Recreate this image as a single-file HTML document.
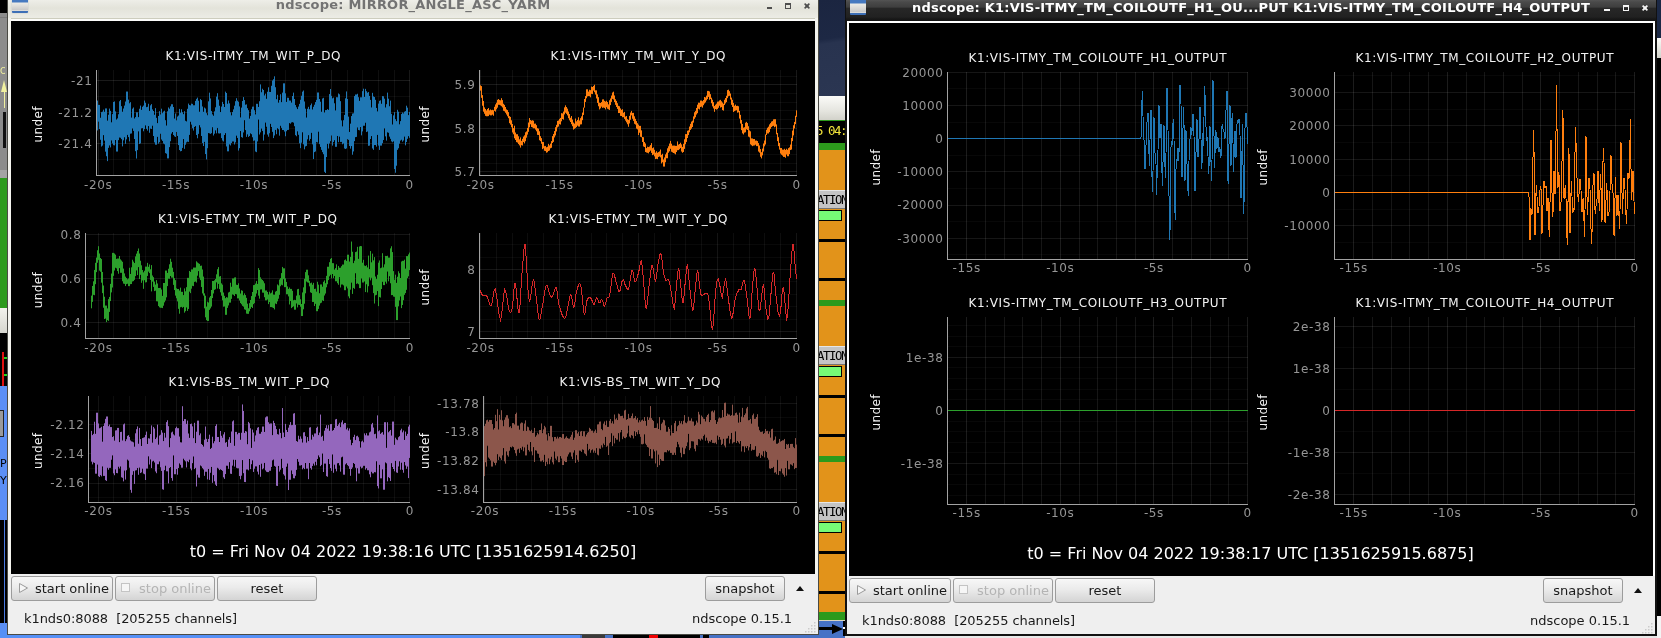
<!DOCTYPE html>
<html><head><meta charset="utf-8"><title>ndscope</title>
<style>
html,body{margin:0;padding:0;background:#000;}
body{width:1661px;height:638px;overflow:hidden;position:relative;font-family:"DejaVu Sans","Liberation Sans",sans-serif;font-size:13px;color:#1a1a1a;}
.a{position:absolute;}
.btn{position:absolute;box-sizing:border-box;border:1px solid #9c9c9c;border-radius:3px;background:linear-gradient(#f7f7f7,#ebebeb 45%,#d4d4d4);height:25px;line-height:24px;text-align:center;font-size:13px;color:#1a1a1a;white-space:nowrap;}
.btn.dis{color:#b4b4b4;}
.st{position:absolute;font-size:13px;color:#1a1a1a;white-space:nowrap;line-height:16px;}
</style></head><body>
<div id="root" style="position:absolute;left:0;top:0;width:1661px;height:638px;overflow:hidden;will-change:transform;background:#000">

<!-- ===== desktop behind the windows ===== -->
<!-- left strip -->
<div class="a" style="left:0;top:0;width:8px;height:13px;background:#000"></div>
<div class="a" style="left:0;top:13px;width:8px;height:165px;background:#8c8c8c"></div>
<div class="a" style="left:0;top:17px;width:8px;height:1px;background:#7a7a7a"></div>
<div class="a" style="left:0;top:66px;width:5px;height:10px;color:#f0f0a0;font-size:9px;line-height:10px;overflow:hidden">OL</div>
<div class="a" style="left:1px;top:80px;width:0;height:0;border-left:3px solid transparent;border-right:3px solid transparent;border-bottom:12px solid #f0f0a0"></div>
<div class="a" style="left:4px;top:90px;width:1px;height:18px;background:#f0f0a0"></div>
<div class="a" style="left:3px;top:112px;width:3px;height:36px;background:#111"></div>
<div class="a" style="left:0;top:170px;width:8px;height:8px;background:#a4a4a4"></div>
<div class="a" style="left:0;top:178px;width:8px;height:130px;background:#2c9a1c"></div>
<div class="a" style="left:0;top:308px;width:8px;height:25px;background:linear-gradient(#f2f2ec,#d6d6ce)"></div>
<div class="a" style="left:0;top:333px;width:8px;height:53px;background:#000"></div>
<div class="a" style="left:2px;top:352px;width:2px;height:34px;background:#e01010"></div>
<div class="a" style="left:4px;top:357px;width:3px;height:2px;background:#20d020"></div>
<div class="a" style="left:4px;top:374px;width:3px;height:2px;background:#20d020"></div>
<div class="a" style="left:0;top:386px;width:8px;height:134px;background:#5b8ff5"></div>
<div class="a" style="left:0;top:410px;width:4px;height:27px;background:#9a9a9a;border-right:1px solid #222;border-top:1px solid #222;border-bottom:1px solid #222;box-sizing:border-box"></div>
<div class="a" style="left:0;top:455px;width:7px;font-size:11px;line-height:17px;color:#000;overflow:hidden">P<br>Y</div>
<div class="a" style="left:0;top:520px;width:8px;height:103px;background:#000"></div>
<div class="a" style="left:4px;top:520px;width:1px;height:103px;background:#4a7ae0"></div>
<div class="a" style="left:0;top:623px;width:8px;height:15px;background:#5b8ff5"></div>
<!-- bottom strip -->
<div class="a" style="left:0;top:630px;width:580px;height:8px;background:#5590f6"></div>
<div class="a" style="left:580px;top:630px;width:270px;height:8px;background:#4672c6"></div>
<div class="a" style="left:582px;top:634px;width:23px;height:4px;background:#3a3a3a"></div>
<div class="a" style="left:613px;top:634px;width:36px;height:4px;background:#000"></div>
<div class="a" style="left:649px;top:634px;width:9px;height:4px;background:#f00000"></div>
<div class="a" style="left:658px;top:634px;width:42px;height:4px;background:#000"></div>
<div class="a" style="left:703px;top:634px;width:6px;height:4px;background:#000"></div>
<!-- middle strip -->
<div class="a" style="left:818px;top:0;width:28px;height:96px;background:linear-gradient(172deg,#1b2540 0%,#1d2844 40%,#28334f 45%,#2b3652 100%)"></div>
<div class="a" style="left:818px;top:96px;width:28px;height:24px;background:linear-gradient(#fbfbf8,#e6e6e0 60%,#d2d2ca)"></div>
<div class="a" style="left:818px;top:120px;width:28px;height:23px;background:#000;border-top:1px solid #2c9a1c;box-sizing:border-box;color:#f2e43a;font-family:'DejaVu Sans Mono','Liberation Mono',monospace;font-size:12.5px;letter-spacing:-1.5px;line-height:20px;overflow:hidden;white-space:nowrap"><span style="margin-left:-2px">5 04:</span></div>
<div class="a" style="left:818px;top:143px;width:28px;height:7px;background:#2c9a1c"></div>
<div class="a" style="left:818px;top:150px;width:28px;height:472px;background:#e2931a"></div>
<!-- repeated widgets -->
<div class="a" style="left:818px;top:190px;width:28px;height:19px;background:#c4c4c4;border-top:1px solid #e6e6e6;border-bottom:1px solid #747474;box-sizing:border-box;font-family:'DejaVu Sans Mono','Liberation Mono',monospace;font-size:12.3px;letter-spacing:-1.4px;line-height:19px;color:#000;overflow:hidden;white-space:nowrap"><span style="margin-left:-1px">ATION</span></div>
<div class="a" style="left:818px;top:210px;width:24px;height:11px;background:#76fb76;border:1px solid #000;border-left:0;box-sizing:border-box"></div>
<div class="a" style="left:818px;top:239px;width:28px;height:3px;background:#000"></div>
<div class="a" style="left:818px;top:278px;width:28px;height:3px;background:#000"></div>
<div class="a" style="left:818px;top:300px;width:28px;height:6px;background:#2c9a1c"></div>
<div class="a" style="left:818px;top:346px;width:28px;height:19px;background:#c4c4c4;border-top:1px solid #e6e6e6;border-bottom:1px solid #747474;box-sizing:border-box;font-family:'DejaVu Sans Mono','Liberation Mono',monospace;font-size:12.3px;letter-spacing:-1.4px;line-height:19px;color:#000;overflow:hidden;white-space:nowrap"><span style="margin-left:-1px">ATION</span></div>
<div class="a" style="left:818px;top:366px;width:24px;height:11px;background:#76fb76;border:1px solid #000;border-left:0;box-sizing:border-box"></div>
<div class="a" style="left:818px;top:395px;width:28px;height:3px;background:#000"></div>
<div class="a" style="left:818px;top:434px;width:28px;height:3px;background:#000"></div>
<div class="a" style="left:818px;top:456px;width:28px;height:6px;background:#2c9a1c"></div>
<div class="a" style="left:818px;top:502px;width:28px;height:19px;background:#c4c4c4;border-top:1px solid #e6e6e6;border-bottom:1px solid #747474;box-sizing:border-box;font-family:'DejaVu Sans Mono','Liberation Mono',monospace;font-size:12.3px;letter-spacing:-1.4px;line-height:19px;color:#000;overflow:hidden;white-space:nowrap"><span style="margin-left:-1px">ATION</span></div>
<div class="a" style="left:818px;top:522px;width:24px;height:11px;background:#76fb76;border:1px solid #000;border-left:0;box-sizing:border-box"></div>
<div class="a" style="left:818px;top:551px;width:28px;height:3px;background:#000"></div>
<div class="a" style="left:818px;top:591px;width:28px;height:3px;background:#000"></div>
<div class="a" style="left:818px;top:612px;width:28px;height:8px;background:#2c9a1c;border-bottom:1.5px solid #d8d4c0"></div>
<div class="a" style="left:818px;top:621px;width:28px;height:17px;background:#4672c6"></div>
<div class="a" style="left:818px;top:627px;width:16px;height:2.5px;background:#000"></div>
<div class="a" style="left:832px;top:623.5px;width:0;height:0;border-top:5px solid transparent;border-bottom:5px solid transparent;border-left:11px solid #000"></div>
<!-- right strip -->
<div class="a" style="left:1656px;top:0;width:5px;height:38px;background:#1b2845"></div>
<div class="a" style="left:1657px;top:38px;width:4px;height:20px;background:linear-gradient(#fbfbf8,#d2d2ca)"></div>
<div class="a" style="left:1657px;top:616px;width:4px;height:22px;background:#f4f4f4"></div>

<!-- ===== WINDOW 1 (inactive) ===== -->
<div class="a" style="left:7px;top:0;width:812px;height:635px;background:#4a4a44"></div>
<div class="a" style="left:8px;top:0;width:810px;height:634px;background:#efefef"></div>
<div class="a" style="left:8px;top:0;width:810px;height:19px;background:linear-gradient(#eeeee8 0%,#e3e3da 45%,#ecece5 100%);border-bottom:1px solid #cdcdbe;box-sizing:border-box"></div>
<div class="a" style="left:8px;top:19px;width:810px;height:2px;background:#fcfcfa"></div>
<div class="a" style="left:8px;top:18px;width:3px;height:556px;background:#f4f4ee"></div>
<div class="a" style="left:815px;top:18px;width:3px;height:556px;background:#f4f4ee"></div>
<!-- icon -->
<div class="a" style="left:12px;top:-2px;width:16px;height:15px;border-radius:1px;background:linear-gradient(#4679c0 0,#4679c0 4px,#ecebe6 5px,#c9c9c9 12px,#eeeeea 13px,#3d6fb6 13.5px,#3d6fb6 15px);box-shadow:0 0 1px #7a8aa0"></div>
<div class="a" style="left:8px;top:-4px;width:810px;height:18px;line-height:18px;text-align:center;font-weight:bold;font-size:13px;color:#737373;white-space:nowrap;letter-spacing:0.22px">ndscope: MIRROR_ANGLE_ASC_YARM</div>
<!-- titlebar buttons -->
<div class="a" style="left:767px;top:7px;width:5px;height:2px;background:#4e4e4e"></div>
<div class="a" style="left:785px;top:3px;width:6px;height:6px;border:1px solid #4e4e4e;border-top:2px solid #4e4e4e;box-sizing:border-box"></div>
<svg class="a" style="left:803px;top:2px" width="8" height="8" viewBox="0 0 8 8"><path d="M1.6 1.6L6.4 6.4M6.4 1.6L1.6 6.4" stroke="#4e4e4e" stroke-width="1.5"/><rect x="2.6" y="2.6" width="2.8" height="2.8" fill="#4e4e4e"/></svg>
<!-- plot area -->
<div class="a" style="left:11px;top:21px;width:804px;height:553px;background:#000"></div>
<!-- buttons -->
<div class="btn" style="left:11px;top:576px;width:102px;text-indent:20px">start online</div>
<svg class="a" style="left:18px;top:581px" width="12" height="14" viewBox="0 0 12 14"><path d="M1.5 2.5L9.5 7L1.5 11.5Z" fill="#f6f6f6" stroke="#9a9a9a" stroke-width="1"/></svg>
<div class="btn dis" style="left:115px;top:576px;width:100px;text-indent:20px">stop online</div>
<div class="a" style="left:121px;top:583px;width:9px;height:9px;box-sizing:border-box;border:1px solid #c4c4c4;background:#f6f6f6"></div>
<div class="btn" style="left:217px;top:576px;width:100px">reset</div>
<div class="btn" style="left:705px;top:576px;width:80px">snapshot</div>
<div class="a" style="left:796px;top:586px;width:0;height:0;border-left:4px solid transparent;border-right:4px solid transparent;border-bottom:5px solid #111"></div>
<div class="st" style="left:24px;top:611px;letter-spacing:-0.07px">k1nds0:8088 &nbsp;[205255 channels]</div>
<div class="st" style="left:692px;top:611px;letter-spacing:0">ndscope 0.15.1</div>
<svg class="a" style="left:805px;top:621px" width="12" height="12" viewBox="0 0 12 12" fill="#cbcbcb"><rect x="9" y="1" width="1.5" height="1.5"/><rect x="6" y="4" width="1.5" height="1.5"/><rect x="9" y="4" width="1.5" height="1.5"/><rect x="3" y="7" width="1.5" height="1.5"/><rect x="6" y="7" width="1.5" height="1.5"/><rect x="9" y="7" width="1.5" height="1.5"/><rect x="0" y="10" width="1.5" height="1.5"/><rect x="3" y="10" width="1.5" height="1.5"/><rect x="6" y="10" width="1.5" height="1.5"/><rect x="9" y="10" width="1.5" height="1.5"/></svg>

<!-- ===== WINDOW 2 (active) ===== -->
<div class="a" style="left:843px;top:621px;width:4px;height:15px;background:#000"></div>
<div class="a" style="left:843px;top:626.5px;width:2px;height:2px;background:#fff"></div>
<div class="a" style="left:845px;top:0;width:812px;height:636px;background:#111"></div>
<div class="a" style="left:847px;top:0;width:808px;height:634px;background:#efefef"></div>
<div class="a" style="left:846px;top:0;width:810px;height:21px;background:linear-gradient(#545454 0,#4a4a4a 2px,#3e3e3e 7px,#272727 8.5px,#212121 17px,#171717 19px,#151515 21px)"></div>
<div class="a" style="left:847px;top:21px;width:808px;height:2px;background:#fff"></div>
<div class="a" style="left:847px;top:21px;width:2px;height:555px;background:#fff"></div>
<div class="a" style="left:1653px;top:21px;width:2px;height:555px;background:#fff"></div>
<div class="a" style="left:850px;top:-2px;width:16px;height:17px;border-radius:1px;background:linear-gradient(#4679c0 0,#4679c0 5px,#ecebe6 6px,#c9c9c9 14px,#eeeeea 15px,#3d6fb6 15.5px,#3d6fb6 17px)"></div>
<div class="a" style="left:912px;top:-1.5px;width:700px;height:18px;line-height:18px;font-weight:bold;font-size:13px;color:#fff;white-space:nowrap;letter-spacing:0.22px">ndscope: K1:VIS-ITMY_TM_COILOUTF_H1_OU...PUT K1:VIS-ITMY_TM_COILOUTF_H4_OUTPUT</div>
<div class="a" style="left:1604px;top:9px;width:6px;height:2px;background:#f4f4f4"></div>
<div class="a" style="left:1623px;top:5px;width:6px;height:6px;border:1px solid #f4f4f4;border-top:2px solid #f4f4f4;box-sizing:border-box"></div>
<svg class="a" style="left:1641px;top:4px" width="8" height="8" viewBox="0 0 8 8"><path d="M1.6 1.6L6.4 6.4M6.4 1.6L1.6 6.4" stroke="#f4f4f4" stroke-width="1.7"/><rect x="2.6" y="2.6" width="2.8" height="2.8" fill="#f4f4f4"/></svg>
<div class="a" style="left:849px;top:23px;width:804px;height:553px;background:#000"></div>
<div class="btn" style="left:849px;top:578px;width:102px;text-indent:20px">start online</div>
<svg class="a" style="left:856px;top:583px" width="12" height="14" viewBox="0 0 12 14"><path d="M1.5 2.5L9.5 7L1.5 11.5Z" fill="#f6f6f6" stroke="#9a9a9a" stroke-width="1"/></svg>
<div class="btn dis" style="left:953px;top:578px;width:100px;text-indent:20px">stop online</div>
<div class="a" style="left:959px;top:585px;width:9px;height:9px;box-sizing:border-box;border:1px solid #c4c4c4;background:#f6f6f6"></div>
<div class="btn" style="left:1055px;top:578px;width:100px">reset</div>
<div class="btn" style="left:1543px;top:578px;width:80px">snapshot</div>
<div class="a" style="left:1634px;top:588px;width:0;height:0;border-left:4px solid transparent;border-right:4px solid transparent;border-bottom:5px solid #111"></div>
<div class="st" style="left:862px;top:613px;letter-spacing:-0.07px">k1nds0:8088 &nbsp;[205255 channels]</div>
<div class="st" style="left:1530px;top:613px;letter-spacing:0">ndscope 0.15.1</div>
<svg class="a" style="left:1642px;top:622px" width="12" height="12" viewBox="0 0 12 12" fill="#cbcbcb"><rect x="9" y="1" width="1.5" height="1.5"/><rect x="6" y="4" width="1.5" height="1.5"/><rect x="9" y="4" width="1.5" height="1.5"/><rect x="3" y="7" width="1.5" height="1.5"/><rect x="6" y="7" width="1.5" height="1.5"/><rect x="9" y="7" width="1.5" height="1.5"/><rect x="0" y="10" width="1.5" height="1.5"/><rect x="3" y="10" width="1.5" height="1.5"/><rect x="6" y="10" width="1.5" height="1.5"/><rect x="9" y="10" width="1.5" height="1.5"/></svg>
<div class="a" style="left:845px;top:634px;width:812px;height:2px;background:#111"></div>
<div class="a" style="left:845px;top:636px;width:812px;height:2px;background:#e8e8e8"></div>

<svg width="1661" height="638" viewBox="0 0 1661 638" style="position:absolute;left:0;top:0" font-family='"DejaVu Sans","Liberation Sans",sans-serif' font-size="12" text-anchor="middle" stroke-width="1">
<g shape-rendering="crispEdges" stroke="#fff" fill="none"><path d="M409.5 70V175" stroke-opacity="0.095"/><path d="M394.5 70V175" stroke-opacity="0.06"/><path d="M378.5 70V175" stroke-opacity="0.06"/><path d="M362.5 70V175" stroke-opacity="0.06"/><path d="M347.5 70V175" stroke-opacity="0.06"/><path d="M331.5 70V175" stroke-opacity="0.095"/><path d="M316.5 70V175" stroke-opacity="0.06"/><path d="M300.5 70V175" stroke-opacity="0.06"/><path d="M285.5 70V175" stroke-opacity="0.06"/><path d="M269.5 70V175" stroke-opacity="0.06"/><path d="M253.5 70V175" stroke-opacity="0.095"/><path d="M238.5 70V175" stroke-opacity="0.06"/><path d="M222.5 70V175" stroke-opacity="0.06"/><path d="M207.5 70V175" stroke-opacity="0.06"/><path d="M191.5 70V175" stroke-opacity="0.06"/><path d="M176.5 70V175" stroke-opacity="0.095"/><path d="M160.5 70V175" stroke-opacity="0.06"/><path d="M144.5 70V175" stroke-opacity="0.06"/><path d="M129.5 70V175" stroke-opacity="0.06"/><path d="M113.5 70V175" stroke-opacity="0.06"/><path d="M98.5 70V175" stroke-opacity="0.095"/><path d="M97 96.5H410" stroke-opacity="0.045"/><path d="M97 128.5H410" stroke-opacity="0.045"/><path d="M97 159.5H410" stroke-opacity="0.045"/><path d="M97 80.5H410" stroke-opacity="0.1"/><path d="M97 112.5H410" stroke-opacity="0.1"/><path d="M97 143.5H410" stroke-opacity="0.1"/></g>
<path d="M97.5 100.59V130.4M98.5 104.88V121.66M99.5 104.88V129.09M100.5 117.75V139.75M101.5 112.18V146.57M102.5 111.64V145.62M103.5 109.66V135.15M104.5 111.75V140.63M105.5 108.41V151.66M106.5 108.41V156.22M107.5 120.63V161.14M108.5 114.76V147.87M109.5 108.58V145.42M110.5 110.87V147.42M111.5 122.32V140.44M112.5 114.13V143.43M113.5 102.01V145.16M114.5 101.45V145.38M115.5 111.4V140M116.5 119.54V151.55M117.5 118.4V151.55M118.5 114.25V140.15M119.5 101.26V137.54M120.5 100.01V137.76M121.5 106.18V139.17M122.5 111.73V146.4M123.5 108.53V140.35M124.5 105.58V137.27M125.5 101.54V143.79M126.5 91.55V139.36M127.5 91.55V134.9M128.5 99.65V137.11M129.5 103.31V141.39M130.5 102.16V133.69M131.5 117.58V133.48M132.5 108.68V128.46M133.5 107.48V130.91M134.5 118.48V139.02M135.5 117.08V151.16M136.5 112.32V158.54M137.5 112.32V150.12M138.5 117.11V131.36M139.5 108.74V144.03M140.5 105.58V143.43M141.5 109.86V128.32M142.5 106.77V128.09M143.5 105.56V131.28M144.5 100.57V129.09M145.5 102.73V125.41M146.5 107.15V128.83M147.5 106.8V130.58M148.5 103.75V126.09M149.5 110.91V132.76M150.5 105.37V128.61M151.5 104.12V128.97M152.5 109.4V125.73M153.5 111V136.01M154.5 114.79V142.39M155.5 108.11V144.71M156.5 117.85V144.71M157.5 123.13V136.86M158.5 115.97V143.65M159.5 111.17V142.19M160.5 114.45V133.77M161.5 108.7V139.5M162.5 113.15V140.93M163.5 111.52V143.52M164.5 110.71V144.3M165.5 120.19V153.11M166.5 125.54V153.73M167.5 111.29V158.4M168.5 107.44V158.4M169.5 108.7V147.11M170.5 106.37V141.25M171.5 104.26V133.6M172.5 104.26V132.02M173.5 107.06V135.03M174.5 118.55V136.34M175.5 113.5V136.98M176.5 120.33V131.98M177.5 116.56V135.95M178.5 115.52V145.09M179.5 108.9V150.06M180.5 112.82V151.3M181.5 109.28V150.97M182.5 112.26V147.91M183.5 114.17V139.05M184.5 111.2V148.85M185.5 120.79V144.77M186.5 121.42V142.42M187.5 108.81V141.65M188.5 103.58V141.94M189.5 105.06V134.9M190.5 105.37V121.78M191.5 103.65V124.59M192.5 103.89V128.26M193.5 105.29V130.59M194.5 105.25V126.98M195.5 100.9V126.11M196.5 98.87V135.03M197.5 97.61V138.29M198.5 100.73V133.87M199.5 111.73V125.22M200.5 99.07V127.47M201.5 100.08V135.97M202.5 106.47V143M203.5 111.78V146.03M204.5 107.58V141.86M205.5 108.55V154.07M206.5 113.13V159.42M207.5 115.24V148.21M208.5 101.35V133.06M209.5 92.67V133.38M210.5 98.45V133.86M211.5 111.06V133.2M212.5 114.39V127.31M213.5 115.75V135.52M214.5 111.34V133.73M215.5 107.32V130.39M216.5 96.6V133.35M217.5 93.19V127.95M218.5 99.6V133.33M219.5 105.76V133.56M220.5 112.07V133.24M221.5 106.57V138.1M222.5 101.89V140.53M223.5 103.98V141.47M224.5 107.01V135.02M225.5 91.65V133.15M226.5 92.99V146.46M227.5 103.74V151.35M228.5 100.48V151.35M229.5 103.33V144.41M230.5 112.33V145.46M231.5 115.33V143M232.5 112.09V141.49M233.5 109.37V141.49M234.5 105.69V144.49M235.5 101.2V142.35M236.5 98.2V135.68M237.5 100.66V137.96M238.5 101.79V150.58M239.5 106.4V148.18M240.5 117.42V131.06M241.5 107.61V137.09M242.5 101.04V137.69M243.5 97.08V132.45M244.5 100.06V120.21M245.5 104.73V130.11M246.5 104.37V136.88M247.5 108.2V134.4M248.5 110.18V136.92M249.5 118.62V136.02M250.5 115.86V133.36M251.5 109.26V134.21M252.5 106.67V137.28M253.5 106.6V140.83M254.5 110.2V140.51M255.5 114.42V151.56M256.5 103.82V152.15M257.5 103.82V141.4M258.5 106.98V119.58M259.5 101.22V134.52M260.5 84.4V132.38M261.5 92.25V128.57M262.5 88.74V130.94M263.5 89.97V140.59M264.5 95.46V134.57M265.5 93.65V122.61M266.5 98.79V126.75M267.5 91.76V134.54M268.5 87.29V136.73M269.5 91.95V133.22M270.5 91.99V123.87M271.5 85.81V126.99M272.5 80.51V131.83M273.5 79.21V138.08M274.5 76.32V135.53M275.5 87.23V129.91M276.5 99.21V134.21M277.5 94.82V128.2M278.5 102.63V129.29M279.5 99.99V135.66M280.5 94.24V125.81M281.5 102.14V127.88M282.5 92.63V130.04M283.5 83.34V130.04M284.5 83.34V131.56M285.5 93.31V136.25M286.5 101.92V131.26M287.5 97.73V129.99M288.5 97.84V129.89M289.5 100.53V123.14M290.5 100.58V123.69M291.5 102.6V122.47M292.5 96.01V122.15M293.5 92.63V122.66M294.5 98.97V126.22M295.5 105.06V135.17M296.5 107.29V136.25M297.5 109.09V131.34M298.5 106.56V134.8M299.5 103.86V143.35M300.5 99.79V148.15M301.5 95.76V142.72M302.5 91.65V132.31M303.5 90.53V144.33M304.5 101.48V149.33M305.5 108.7V146.43M306.5 117.56V145.92M307.5 108.8V139.32M308.5 106.82V135.18M309.5 109.26V140.69M310.5 105.19V138.95M311.5 103.51V132.87M312.5 109.47V144.35M313.5 106.8V159.07M314.5 104.72V152.12M315.5 102.07V151.48M316.5 99.87V141.98M317.5 92.53V142.44M318.5 92.5V131.71M319.5 99.03V144.18M320.5 101.72V146.93M321.5 111.75V149.85M322.5 98.52V152.18M323.5 97.85V154.24M324.5 112.58V171.84M325.5 110.06V173.04M326.5 110.07V157.02M327.5 109.11V143.83M328.5 109.86V148.54M329.5 94.09V143.42M330.5 89V141.16M331.5 95.84V135.49M332.5 98.36V145.61M333.5 97.61V141.98M334.5 103.29V140.19M335.5 110.45V146.82M336.5 97.19V146.82M337.5 97.29V135.97M338.5 93.45V142.18M339.5 94.31V136.67M340.5 101.17V141.93M341.5 120.38V141.9M342.5 126.39V144.28M343.5 120.23V143.48M344.5 114.93V148.49M345.5 98.3V149.03M346.5 91.45V148.45M347.5 98.99V139.18M348.5 116.64V139.88M349.5 131.93V146M350.5 123.65V148.63M351.5 116.06V146.09M352.5 113.55V154.73M353.5 113.28V151.45M354.5 96.05V141.14M355.5 94.47V137.15M356.5 94.49V136.9M357.5 93.77V127.49M358.5 97.19V130.01M359.5 100.88V130.35M360.5 97.32V127.14M361.5 97.32V135.35M362.5 91.13V131.42M363.5 88.7V125.78M364.5 96.95V125.78M365.5 88.86V122.77M366.5 91.23V132.05M367.5 92.7V131.51M368.5 92.03V145.84M369.5 95.94V145.63M370.5 99.88V139.06M371.5 107.45V136.09M372.5 92.83V148.47M373.5 96.41V149.86M374.5 97.05V145.06M375.5 99.83V144.99M376.5 107.95V146.65M377.5 111.4V134.91M378.5 103.58V145.6M379.5 100.83V149.93M380.5 100.32V145.64M381.5 103.78V145.64M382.5 96.08V143.13M383.5 96.27V139.99M384.5 98.66V128.36M385.5 107.47V136.37M386.5 104.2V140.59M387.5 92.61V132.34M388.5 98.71V132.81M389.5 106.22V136.62M390.5 100.62V138.84M391.5 113.86V141.38M392.5 124.49V142.26M393.5 115.37V141.39M394.5 112.15V169.06M395.5 119.16V172.73M396.5 121.15V165.73M397.5 109.81V149.83M398.5 111.73V148.27M399.5 124.31V143.62M400.5 121.13V140.62M401.5 114.02V139.75M402.5 112.5V141.69M403.5 113.42V140.47M404.5 111.7V136.64M405.5 111.12V145.35M406.5 105.71V142.03M407.5 107.66V138.8M408.5 115.11V136.15M409.5 111.92V137.82" fill="none" stroke="#1f77b4"/>
<path d="M96.5 70V175.5H410" fill="none" stroke="#a2a2a2" shape-rendering="crispEdges"/>
<text x="98.2" y="188.5" fill="#969696" letter-spacing="0.6">-20s</text>
<text x="176.05" y="188.5" fill="#969696" letter-spacing="0.6">-15s</text>
<text x="253.9" y="188.5" fill="#969696" letter-spacing="0.6">-10s</text>
<text x="331.75" y="188.5" fill="#969696" letter-spacing="0.6">-5s</text>
<text x="409.6" y="188.5" fill="#969696" letter-spacing="0.6">0</text>
<text x="92.6" y="84.8" fill="#969696" text-anchor="end" letter-spacing="0.65">-21</text>
<text x="92.6" y="116.6" fill="#969696" text-anchor="end" letter-spacing="0.65">-21.2</text>
<text x="92.6" y="148.3" fill="#969696" text-anchor="end" letter-spacing="0.65">-21.4</text>
<text x="253" y="59.8" fill="#f2f2f2" textLength="175" lengthAdjust="spacing">K1:VIS-ITMY_TM_WIT_P_DQ</text>
<text x="42.4" y="124.3" fill="#f2f2f2" letter-spacing="0.35" transform="rotate(-90 42.4 124.3)">undef</text>
<g shape-rendering="crispEdges" stroke="#fff" fill="none"><path d="M796.5 70V175" stroke-opacity="0.095"/><path d="M780.5 70V175" stroke-opacity="0.06"/><path d="M764.5 70V175" stroke-opacity="0.06"/><path d="M749.5 70V175" stroke-opacity="0.06"/><path d="M733.5 70V175" stroke-opacity="0.06"/><path d="M717.5 70V175" stroke-opacity="0.095"/><path d="M701.5 70V175" stroke-opacity="0.06"/><path d="M685.5 70V175" stroke-opacity="0.06"/><path d="M670.5 70V175" stroke-opacity="0.06"/><path d="M654.5 70V175" stroke-opacity="0.06"/><path d="M638.5 70V175" stroke-opacity="0.095"/><path d="M622.5 70V175" stroke-opacity="0.06"/><path d="M606.5 70V175" stroke-opacity="0.06"/><path d="M591.5 70V175" stroke-opacity="0.06"/><path d="M575.5 70V175" stroke-opacity="0.06"/><path d="M559.5 70V175" stroke-opacity="0.095"/><path d="M543.5 70V175" stroke-opacity="0.06"/><path d="M527.5 70V175" stroke-opacity="0.06"/><path d="M512.5 70V175" stroke-opacity="0.06"/><path d="M496.5 70V175" stroke-opacity="0.06"/><path d="M480.5 70V175" stroke-opacity="0.095"/><path d="M480 76.5H797" stroke-opacity="0.045"/><path d="M480 93.5H797" stroke-opacity="0.045"/><path d="M480 102.5H797" stroke-opacity="0.045"/><path d="M480 110.5H797" stroke-opacity="0.045"/><path d="M480 119.5H797" stroke-opacity="0.045"/><path d="M480 136.5H797" stroke-opacity="0.045"/><path d="M480 145.5H797" stroke-opacity="0.045"/><path d="M480 154.5H797" stroke-opacity="0.045"/><path d="M480 163.5H797" stroke-opacity="0.045"/><path d="M480 84.5H797" stroke-opacity="0.1"/><path d="M480 128.5H797" stroke-opacity="0.1"/><path d="M480 171.5H797" stroke-opacity="0.1"/></g>
<path d="M480.5 85.3V90.61M481.5 86.09V97.83M482.5 95.13V105.74M483.5 100.94V111.69M484.5 107.38V113.75M485.5 108.98V115.87M486.5 110.48V116.27M487.5 109.03V116.26M488.5 108.03V116.09M489.5 110.34V114.72M490.5 109.47V115.4M491.5 110.16V115.39M492.5 109.82V114.66M493.5 110.24V115.78M494.5 106.81V110.92M495.5 104.41V111.66M496.5 102.73V109.28M497.5 99.82V107.65M498.5 99.02V104.79M499.5 99.92V104.85M500.5 100.31V105.45M501.5 98.19V106.27M502.5 100.11V107.48M503.5 103.76V110.77M504.5 104.87V111.32M505.5 107V112.78M506.5 109.39V114.5M507.5 110.13V116.3M508.5 112.12V118.21M509.5 116.12V123.19M510.5 116.93V124.68M511.5 120.29V127.27M512.5 124.01V132.49M513.5 128.14V134.3M514.5 125.72V138.31M515.5 132.53V140.01M516.5 134.24V142.14M517.5 134.24V142.59M518.5 136.26V144.12M519.5 139.3V145.43M520.5 137.39V147.58M521.5 140.83V145.18M522.5 138.84V145.54M523.5 136.59V142.05M524.5 135.32V143.41M525.5 132.31V141.25M526.5 131.38V137.67M527.5 127.96V134.58M528.5 122.52V131.82M529.5 118.05V127.3M530.5 120.03V124.32M531.5 120.66V126.98M532.5 120.22V127.46M533.5 120.73V128.29M534.5 123.7V128.28M535.5 123.58V129.62M536.5 125.17V131.3M537.5 128.16V134.83M538.5 128.62V135.03M539.5 131.28V140.27M540.5 136.17V141.15M541.5 138.15V143.75M542.5 141.9V149.17M543.5 142.04V148.33M544.5 146.13V150.78M545.5 146.06V151.09M546.5 147.28V152.69M547.5 146.69V152.25M548.5 143.85V150.99M549.5 145.39V150.56M550.5 143.67V148.3M551.5 141.11V147.75M552.5 136.1V142.97M553.5 133.94V141.87M554.5 131.08V137.45M555.5 127.23V135.43M556.5 124.85V131.47M557.5 120.86V127.45M558.5 120.49V126.56M559.5 118.86V124.12M560.5 117.89V124.56M561.5 113.18V121.31M562.5 113.41V119.01M563.5 111.54V119.65M564.5 107.35V114.41M565.5 105.32V112.72M566.5 107V113.84M567.5 108.61V115.42M568.5 111.48V118.24M569.5 114.07V120.35M570.5 117.77V122.01M571.5 116.04V124.21M572.5 119.52V126.26M573.5 122.55V129.59M574.5 123.59V128.84M575.5 118.5V127.99M576.5 121.32V127.12M577.5 119.94V125.66M578.5 117.24V126.54M579.5 120.47V126.6M580.5 118.19V124.47M581.5 116.35V124.33M582.5 112.59V120.18M583.5 107.54V114.93M584.5 99V107.67M585.5 96.09V101.95M586.5 89.32V98.29M587.5 89.32V96.43M588.5 91.59V96.11M589.5 89.72V96.25M590.5 90.15V97.33M591.5 86.54V93.86M592.5 87.01V94.11M593.5 85.93V90.64M594.5 84.74V92.22M595.5 90.34V94.56M596.5 90.34V98.49M597.5 94.35V102.91M598.5 97.16V106.25M599.5 102.66V109.44M600.5 102.99V108.34M601.5 102.06V106.65M602.5 99.45V107.88M603.5 99.35V107.52M604.5 100.83V107.93M605.5 101.6V109.42M606.5 100.77V107.18M607.5 102.07V108.75M608.5 104.36V109.34M609.5 100.29V109.94M610.5 98.46V105.14M611.5 95.55V101.89M612.5 92.53V98.87M613.5 91.66V99.5M614.5 95.46V102.07M615.5 99.23V104.85M616.5 100.89V106.97M617.5 103.22V108.91M618.5 105.83V113.05M619.5 106.28V113.05M620.5 108.42V115.87M621.5 109.85V116.02M622.5 109.24V117.22M623.5 112.69V117.22M624.5 111.9V118.92M625.5 116.57V120.67M626.5 115.98V122.39M627.5 119.13V124.24M628.5 119.88V126.75M629.5 115.89V123.44M630.5 112.55V119.76M631.5 110.92V115.36M632.5 112.93V118.77M633.5 112.85V120.9M634.5 116.31V123.81M635.5 118.81V124.59M636.5 121.08V128.6M637.5 123.22V129.42M638.5 124.65V135.07M639.5 125.87V132.73M640.5 125.87V136.81M641.5 130.36V137.27M642.5 136.97V142.03M643.5 137.21V146.47M644.5 141.97V147.03M645.5 143.49V152.02M646.5 148.12V152.56M647.5 146.66V152.84M648.5 147.05V153.4M649.5 146.49V151.89M650.5 145.09V150.67M651.5 143.1V152.88M652.5 148.16V155.15M653.5 147.43V154.58M654.5 149.79V156.37M655.5 152.65V159.1M656.5 151.23V158.82M657.5 152.69V159.16M658.5 152.08V156.96M659.5 151.36V156.47M660.5 149.49V157.39M661.5 154.86V163.42M662.5 153.78V162.29M663.5 159.44V166.59M664.5 157.45V166.59M665.5 154.4V162.27M666.5 152.53V158.25M667.5 148.29V158.25M668.5 146.25V152.73M669.5 143.54V151.31M670.5 140.9V148.85M671.5 143.7V151.73M672.5 145.65V152.36M673.5 145.6V153M674.5 145.6V153.5M675.5 145.93V154.37M676.5 145.93V152.01M677.5 141.4V150.26M678.5 144.63V150.11M679.5 143.96V149.22M680.5 142.72V148.11M681.5 144.42V151.56M682.5 146.83V152.79M683.5 143.78V151.98M684.5 139.28V148.85M685.5 134.1V144.28M686.5 134.11V141.91M687.5 130.74V138.03M688.5 130.31V135.11M689.5 126.56V132.29M690.5 123.85V129.92M691.5 121.59V128.66M692.5 120.66V127M693.5 116.39V122.64M694.5 112.26V118.83M695.5 110.85V117.28M696.5 107.96V114.54M697.5 104.67V113.2M698.5 102.67V108.77M699.5 102.73V109.46M700.5 100.54V107.02M701.5 100.54V106.63M702.5 101.21V107.67M703.5 99.96V105.23M704.5 96.96V103.53M705.5 97.43V102.41M706.5 95.62V100.5M707.5 90.92V99.11M708.5 90.92V96.93M709.5 91.47V99.78M710.5 94.18V99.1M711.5 97.7V103.25M712.5 99.76V106.4M713.5 102.14V108.43M714.5 105.95V111.8M715.5 104.72V109.01M716.5 103.63V109.61M717.5 101.72V109.06M718.5 101.49V107.79M719.5 100.43V105.76M720.5 99.85V107.57M721.5 101.22V107.13M722.5 102.52V110.08M723.5 103.76V110.65M724.5 99.75V105.05M725.5 98.03V103.43M726.5 95.75V102.11M727.5 90.12V98.16M728.5 89.67V96.31M729.5 91.2V95.83M730.5 93.53V99.46M731.5 97.61V104.81M732.5 99.82V106.99M733.5 102.91V111.97M734.5 105.7V111.16M735.5 104.55V110.59M736.5 105.95V110.27M737.5 105.78V112.7M738.5 106.26V112.35M739.5 110.9V118.58M740.5 114.85V123.51M741.5 120.05V130.16M742.5 123.98V133.38M743.5 127.67V134.46M744.5 127.24V132.67M745.5 122.74V132.28M746.5 121.86V129.35M747.5 123.08V129.99M748.5 126.24V136.64M749.5 130.36V137.33M750.5 131.33V144.36M751.5 138.37V145.26M752.5 138.47V146.14M753.5 139.06V145.6M754.5 138.99V145.45M755.5 140.63V144.69M756.5 140.51V146.12M757.5 141.07V146.13M758.5 143.09V151.55M759.5 145.52V152.67M760.5 149.09V156.78M761.5 152.17V158.4M762.5 148.58V155.4M763.5 143.51V151.5M764.5 140.5V146.35M765.5 134.48V144.49M766.5 129.78V134.99M767.5 127.75V133.47M768.5 126.67V133.47M769.5 124.41V132.14M770.5 123.14V128.89M771.5 121.57V127.07M772.5 121.14V126.24M773.5 119.37V125.84M774.5 119.18V127.21M775.5 119.18V126.51M776.5 124.4V134.33M777.5 132.94V141.14M778.5 137.18V146.11M779.5 142.95V149.6M780.5 147.93V153.53M781.5 148.03V154.73M782.5 149.59V155.64M783.5 149.68V156.91M784.5 148.78V156.94M785.5 149.91V157.78M786.5 148.74V154.5M787.5 149.75V156.24M788.5 148.1V156.24M789.5 147.32V154.11M790.5 144.55V150.06M791.5 137.9V149.56M792.5 130.59V141.13M793.5 125.27V135.43M794.5 121.91V128.39M795.5 115.77V124.14M796.5 110.35V116.89" fill="none" stroke="#ff7f0e"/>
<path d="M479.5 70V175.5H797" fill="none" stroke="#a2a2a2" shape-rendering="crispEdges"/>
<text x="480.55" y="188.5" fill="#969696" letter-spacing="0.6">-20s</text>
<text x="559.55" y="188.5" fill="#969696" letter-spacing="0.6">-15s</text>
<text x="638.55" y="188.5" fill="#969696" letter-spacing="0.6">-10s</text>
<text x="717.55" y="188.5" fill="#969696" letter-spacing="0.6">-5s</text>
<text x="796.55" y="188.5" fill="#969696" letter-spacing="0.6">0</text>
<text x="475.6" y="89.3" fill="#969696" text-anchor="end" letter-spacing="0.65">5.9</text>
<text x="475.6" y="132.7" fill="#969696" text-anchor="end" letter-spacing="0.65">5.8</text>
<text x="475.6" y="176.1" fill="#969696" text-anchor="end" letter-spacing="0.65">5.7</text>
<text x="638" y="59.8" fill="#f2f2f2" textLength="175" lengthAdjust="spacing">K1:VIS-ITMY_TM_WIT_Y_DQ</text>
<text x="429.5" y="124.3" fill="#f2f2f2" letter-spacing="0.35" transform="rotate(-90 429.5 124.3)">undef</text>
<g shape-rendering="crispEdges" stroke="#fff" fill="none"><path d="M409.5 233V338" stroke-opacity="0.08"/><path d="M394.5 233V338" stroke-opacity="0.052"/><path d="M378.5 233V338" stroke-opacity="0.052"/><path d="M363.5 233V338" stroke-opacity="0.052"/><path d="M347.5 233V338" stroke-opacity="0.052"/><path d="M331.5 233V338" stroke-opacity="0.08"/><path d="M316.5 233V338" stroke-opacity="0.052"/><path d="M300.5 233V338" stroke-opacity="0.052"/><path d="M285.5 233V338" stroke-opacity="0.052"/><path d="M269.5 233V338" stroke-opacity="0.052"/><path d="M254.5 233V338" stroke-opacity="0.08"/><path d="M238.5 233V338" stroke-opacity="0.052"/><path d="M222.5 233V338" stroke-opacity="0.052"/><path d="M207.5 233V338" stroke-opacity="0.052"/><path d="M191.5 233V338" stroke-opacity="0.052"/><path d="M176.5 233V338" stroke-opacity="0.08"/><path d="M160.5 233V338" stroke-opacity="0.052"/><path d="M145.5 233V338" stroke-opacity="0.052"/><path d="M129.5 233V338" stroke-opacity="0.052"/><path d="M113.5 233V338" stroke-opacity="0.052"/><path d="M98.5 233V338" stroke-opacity="0.08"/><path d="M86 256.5H410" stroke-opacity="0.035"/><path d="M86 300.5H410" stroke-opacity="0.035"/><path d="M86 234.5H410" stroke-opacity="0.085"/><path d="M86 278.5H410" stroke-opacity="0.085"/><path d="M86 322.5H410" stroke-opacity="0.085"/></g>
<path d="M91.5 295.62V308.32M92.5 285.98V301.86M93.5 281.31V294.83M94.5 269.93V295.21M95.5 262.8V284.18M96.5 257.56V272.13M97.5 250.27V262.74M98.5 246.19V259.89M99.5 253.49V270.63M100.5 257.98V271.78M101.5 259.08V282.68M102.5 271.98V293.13M103.5 285.49V307.72M104.5 296.72V319M105.5 305.57V318.55M106.5 305.58V322.09M107.5 308.42V320.12M108.5 299.15V320.92M109.5 296.94V311.91M110.5 283.89V301.09M111.5 273.53V292.42M112.5 252.87V287.51M113.5 252.87V275.89M114.5 253.51V270.51M115.5 254.68V267.76M116.5 258.91V268.39M117.5 258.53V271.09M118.5 258.53V273.73M119.5 255.98V268.12M120.5 259.33V272.8M121.5 260.52V272.8M122.5 261.79V281.22M123.5 268.59V283.62M124.5 273.38V283.88M125.5 276.63V286.05M126.5 278.04V284.15M127.5 279.29V283.76M128.5 278.47V286.14M129.5 267.79V286.14M130.5 273.97V284.13M131.5 267.33V284.04M132.5 259.75V281.49M133.5 261.62V281.12M134.5 263.02V279.85M135.5 256.38V276.11M136.5 253.65V270.43M137.5 251.09V275.06M138.5 248.47V267.14M139.5 253.52V279.04M140.5 260.72V274.8M141.5 265.32V282.82M142.5 270.03V280.45M143.5 272.33V288.84M144.5 270.74V280.19M145.5 266.62V282.44M146.5 266.62V282.21M147.5 262.87V275.96M148.5 266.82V271.63M149.5 264.43V273.09M150.5 269.27V279.94M151.5 265.11V291.42M152.5 275.51V281.65M153.5 277.17V286.91M154.5 281.55V291.08M155.5 284.56V290.67M156.5 280.1V301.25M157.5 283.48V301.41M158.5 287.97V306.07M159.5 287.97V307.35M160.5 287.81V307.8M161.5 289.49V307.8M162.5 295.89V308.08M163.5 282.99V305.7M164.5 282.99V302.37M165.5 270.57V300.52M166.5 270.57V297.32M167.5 272.92V286.09M168.5 268.74V278.65M169.5 264.29V278.81M170.5 258.76V276.04M171.5 261.81V277.67M172.5 267.69V277.67M173.5 271.92V284.89M174.5 278.21V290.07M175.5 280.17V295.62M176.5 288.29V298.28M177.5 288.99V301.41M178.5 288.97V308.83M179.5 290.55V313.71M180.5 287.65V307.28M181.5 291.82V306.9M182.5 291.82V307.77M183.5 295.1V306.95M184.5 288.38V312.67M185.5 291.31V311.21M186.5 287.17V307.43M187.5 277.85V310.92M188.5 277.85V308.95M189.5 270.98V291.65M190.5 271.91V293.13M191.5 269.41V288.68M192.5 269.41V285.85M193.5 267.56V286.13M194.5 267.56V281.9M195.5 267.53V281.58M196.5 261.34V282.51M197.5 262.44V275.72M198.5 263.26V271.11M199.5 263.89V277.66M200.5 265.84V280.14M201.5 265.6V286.98M202.5 269.51V293.45M203.5 276.58V295.56M204.5 293.36V308.33M205.5 295.71V317.3M206.5 306.58V320.16M207.5 301.69V321.04M208.5 302.5V320.94M209.5 297.51V309.86M210.5 296.01V308.41M211.5 289.99V306.57M212.5 280.97V298.06M213.5 280.97V293.47M214.5 280.26V289.87M215.5 278.98V289.26M216.5 274.31V282.39M217.5 269.2V288.58M218.5 267.12V283.9M219.5 276.49V289.14M220.5 276.07V292.34M221.5 283.35V295.7M222.5 284.7V300.32M223.5 292.53V306.69M224.5 295.82V306.52M225.5 298.16V314.83M226.5 297.08V314.82M227.5 297.55V307.9M228.5 292.51V305.45M229.5 291.83V302.63M230.5 282.75V302.63M231.5 286.76V298.86M232.5 278.45V294.46M233.5 278.45V294.82M234.5 277.51V296.01M235.5 277.31V293.98M236.5 284.76V294.32M237.5 284.98V298.38M238.5 283.29V298.38M239.5 288.48V300.55M240.5 293.53V303.08M241.5 290.29V304.29M242.5 290.77V305.87M243.5 295.25V306.68M244.5 293.38V309.34M245.5 295.06V309.8M246.5 297.85V313.61M247.5 303.67V313.85M248.5 308.28V313.85M249.5 303.15V311.29M250.5 299.98V308.89M251.5 296.07V306.95M252.5 292V308.01M253.5 285.14V304.17M254.5 284.96V303.12M255.5 283.58V296.72M256.5 281.06V293.53M257.5 283.93V290.06M258.5 268.1V295.64M259.5 269.96V298.63M260.5 277.31V289.51M261.5 279.1V289.38M262.5 279.96V292.63M263.5 281.26V292.72M264.5 283.28V297.19M265.5 290.52V300.36M266.5 290.46V300.36M267.5 291.94V299.51M268.5 294.48V304.1M269.5 291.7V302.03M270.5 293.39V307.06M271.5 292.64V307.11M272.5 290.34V307.5M273.5 294.56V308.05M274.5 294.67V309.46M275.5 291.65V303.56M276.5 290.9V304.1M277.5 284.43V301.38M278.5 285.4V298.71M279.5 279.53V294.83M280.5 278.12V286.26M281.5 273.09V284.77M282.5 266.95V285.3M283.5 268.34V279.24M284.5 268.34V287.17M285.5 278.32V287.11M286.5 281.96V294.29M287.5 286.43V294.29M288.5 288.93V296.4M289.5 287.45V304.47M290.5 288.92V301.05M291.5 288.92V308.08M292.5 290.8V307.15M293.5 300.27V306.36M294.5 299.79V309.68M295.5 300.1V309.68M296.5 295.63V303.47M297.5 289.23V307.41M298.5 288.88V304.75M299.5 295.21V304.97M300.5 299.22V306.74M301.5 303.97V316.04M302.5 292.43V316.04M303.5 287.36V309.28M304.5 278.8V303.73M305.5 272.11V293.31M306.5 269.7V281.54M307.5 269.7V282.4M308.5 275.32V282.72M309.5 280.83V286.33M310.5 283.23V292.34M311.5 282.59V292.94M312.5 284.69V301.94M313.5 282.84V301.94M314.5 288.96V306.03M315.5 288.66V303.84M316.5 291.66V311.21M317.5 281.76V311.21M318.5 284.63V308.92M319.5 293.23V305.58M320.5 284.45V303.25M321.5 284.45V302.67M322.5 286.73V300.38M323.5 281.75V301M324.5 280.35V295.52M325.5 283.22V293.54M326.5 275.87V287.3M327.5 266.74V284.28M328.5 266.74V280.08M329.5 262.2V276.35M330.5 258.88V274.78M331.5 257.98V278.17M332.5 263.1V274M333.5 263.21V278.12M334.5 269.58V275.95M335.5 268.12V281.27M336.5 264.37V281.27M337.5 269.85V283.22M338.5 265.96V284.79M339.5 267.73V277.22M340.5 267.73V287.49M341.5 266.17V284.53M342.5 264.56V284.53M343.5 264.56V285.38M344.5 260.21V290.21M345.5 259.47V290.21M346.5 260.92V286.56M347.5 254.71V288.43M348.5 254.71V296.35M349.5 261.57V298.3M350.5 256.93V289.63M351.5 241.54V282.66M352.5 251.74V293.93M353.5 263.11V287.95M354.5 260.69V288.8M355.5 252.09V273.28M356.5 251.6V283.88M357.5 246.8V283.37M358.5 258.86V284.21M359.5 246.5V288.11M360.5 246.01V288.11M361.5 246.19V278.36M362.5 262.71V282.53M363.5 259.82V282.53M364.5 265.51V281.45M365.5 266.05V292.08M366.5 265.25V284.29M367.5 267.42V292.41M368.5 255.6V286.21M369.5 269.08V277.54M370.5 251.07V280.38M371.5 262.33V277.84M372.5 253.62V285.18M373.5 260.39V293.1M374.5 257.12V303.53M375.5 276.53V295.35M376.5 279.06V294.85M377.5 274.77V291.07M378.5 262.68V306.14M379.5 260.46V297.07M380.5 268.2V297.54M381.5 267.62V289.03M382.5 253.2V281.8M383.5 267.39V285.11M384.5 264.32V285.11M385.5 255.92V281.69M386.5 256.02V283.62M387.5 255.73V271.55M388.5 257.59V281.3M389.5 257.59V276.26M390.5 248.39V283.25M391.5 246.26V295.13M392.5 252.09V295.05M393.5 271.12V296.57M394.5 279.73V296.83M395.5 274.68V306.82M396.5 282.85V320.08M397.5 276.75V320.08M398.5 271.29V306.34M399.5 273.28V300.43M400.5 278.03V296.49M401.5 261.51V308.12M402.5 260.8V304.99M403.5 260.8V300.21M404.5 259.69V294.83M405.5 268.63V293.08M406.5 256.12V289.82M407.5 256.14V278.12M408.5 254.41V276.33M409.5 252.59V270.08" fill="none" stroke="#2ca02c"/>
<path d="M85.5 233V338.5H410" fill="none" stroke="#a2a2a2" shape-rendering="crispEdges"/>
<text x="98.4" y="351.5" fill="#969696" letter-spacing="0.6">-20s</text>
<text x="176.25" y="351.5" fill="#969696" letter-spacing="0.6">-15s</text>
<text x="254.1" y="351.5" fill="#969696" letter-spacing="0.6">-10s</text>
<text x="331.95" y="351.5" fill="#969696" letter-spacing="0.6">-5s</text>
<text x="409.8" y="351.5" fill="#969696" letter-spacing="0.6">0</text>
<text x="81.6" y="238.8" fill="#969696" text-anchor="end" letter-spacing="0.65">0.8</text>
<text x="81.6" y="282.7" fill="#969696" text-anchor="end" letter-spacing="0.65">0.6</text>
<text x="81.6" y="326.6" fill="#969696" text-anchor="end" letter-spacing="0.65">0.4</text>
<text x="247.5" y="222.8" fill="#f2f2f2" textLength="179" lengthAdjust="spacing">K1:VIS-ETMY_TM_WIT_P_DQ</text>
<text x="42.4" y="290.1" fill="#f2f2f2" letter-spacing="0.35" transform="rotate(-90 42.4 290.1)">undef</text>
<g shape-rendering="crispEdges" stroke="#fff" fill="none"><path d="M796.5 233V338" stroke-opacity="0.08"/><path d="M780.5 233V338" stroke-opacity="0.052"/><path d="M764.5 233V338" stroke-opacity="0.052"/><path d="M749.5 233V338" stroke-opacity="0.052"/><path d="M733.5 233V338" stroke-opacity="0.052"/><path d="M717.5 233V338" stroke-opacity="0.08"/><path d="M701.5 233V338" stroke-opacity="0.052"/><path d="M685.5 233V338" stroke-opacity="0.052"/><path d="M670.5 233V338" stroke-opacity="0.052"/><path d="M654.5 233V338" stroke-opacity="0.052"/><path d="M638.5 233V338" stroke-opacity="0.08"/><path d="M622.5 233V338" stroke-opacity="0.052"/><path d="M606.5 233V338" stroke-opacity="0.052"/><path d="M591.5 233V338" stroke-opacity="0.052"/><path d="M575.5 233V338" stroke-opacity="0.052"/><path d="M559.5 233V338" stroke-opacity="0.08"/><path d="M543.5 233V338" stroke-opacity="0.052"/><path d="M527.5 233V338" stroke-opacity="0.052"/><path d="M512.5 233V338" stroke-opacity="0.052"/><path d="M496.5 233V338" stroke-opacity="0.052"/><path d="M480.5 233V338" stroke-opacity="0.08"/><path d="M480 244.5H797" stroke-opacity="0.035"/><path d="M480 257.5H797" stroke-opacity="0.035"/><path d="M480 281.5H797" stroke-opacity="0.035"/><path d="M480 294.5H797" stroke-opacity="0.035"/><path d="M480 306.5H797" stroke-opacity="0.035"/><path d="M480 319.5H797" stroke-opacity="0.035"/><path d="M480 269.5H797" stroke-opacity="0.085"/><path d="M480 331.5H797" stroke-opacity="0.085"/></g>
<polyline points="479.31,287.22 479.93,289.38 480.82,292.07 481.84,294.17 482.83,295.68 483.77,295.72 484.74,295.45 485.73,295.03 486.74,295.82 487.8,298.44 488.88,301.55 489.98,305.25 491.05,306.21 492.06,302.91 493.04,296.46 494.05,290.4 495.16,288.8 496.42,294.47 497.79,305.04 499.16,315.3 500.44,319.95 501.58,315.27 502.64,305.37 503.68,294.78 504.75,289.46 505.89,292.03 507.08,298.54 508.23,306.45 509.25,311.14 510.09,312.39 510.81,312.64 511.48,311.14 512.18,308.43 512.89,302.17 513.59,293.88 514.31,285.75 515.12,283.04 516.05,287.87 517.07,299.18 518.1,309.81 519.03,313.1 519.83,307.94 520.56,297.05 521.26,283.73 521.97,273.07 522.72,264.27 523.5,254.56 524.24,246.6 524.9,243.7 525.45,246.64 525.91,253.83 526.35,262.85 526.86,270.71 527.42,279.67 528.01,289.7 528.66,297.19 529.4,301.18 530.31,298.72 531.35,291.53 532.39,283.51 533.32,279.68 534.08,281.44 534.74,285.17 535.37,291.12 536.06,296.4 536.81,302.67 537.59,309.62 538.38,316.4 539.19,320.02 539.99,318.75 540.8,315.75 541.64,309.99 542.51,305.26 543.45,300.21 544.43,293.53 545.44,287.76 546.43,285.05 547.43,285.44 548.45,289.2 549.43,293.33 550.34,296.54 551.15,297.29 551.87,296.11 552.57,296.27 553.28,294.75 554.01,292.18 554.75,289.86 555.48,287.64 556.21,287.67 556.89,290.27 557.52,295.23 558.24,300.62 559.15,305.44 560.39,309.45 561.86,314.27 563.35,317.26 564.63,318.71 565.62,317.36 566.45,314.39 567.2,310.11 567.95,306.31 568.72,302.29 569.45,298.6 570.17,295.66 570.89,294.48 571.62,296.52 572.36,301.28 573.09,305.26 573.83,307.26 574.54,304.72 575.23,300.38 575.96,294.65 576.76,290.47 577.68,287.47 578.68,284.52 579.7,283.54 580.68,284.81 581.6,290.29 582.51,300.01 583.38,309.06 584.2,314.21 584.92,313.33 585.57,309.42 586.22,304.01 586.94,300.67 587.76,298.71 588.65,297.57 589.56,297.56 590.46,297.68 591.36,298.87 592.27,301.05 593.16,303.23 593.98,304.38 594.73,303.81 595.41,300.58 596.07,298.59 596.72,297.75 597.37,298.2 598.01,300.38 598.63,302.06 599.27,302.91 599.9,302.89 600.53,301.11 601.16,299.91 601.81,299.3 602.49,300.82 603.18,302.86 603.87,305.48 604.55,306.19 605.2,304.83 605.83,302.67 606.46,299.5 607.09,297.45 607.71,297.26 608.32,297.26 608.95,297.45 609.64,295.83 610.41,290.56 611.25,283.95 612.11,276.96 612.96,273.35 613.8,273.16 614.64,275.82 615.47,279.65 616.29,282.92 617.08,285.48 617.86,288.43 618.63,291.13 619.42,291.65 620.25,290.21 621.1,285.84 621.94,281.77 622.75,280.18 623.51,279.83 624.24,281.99 624.96,284.32 625.68,286.21 626.41,287.06 627.12,288.71 627.85,289.6 628.62,288.91 629.47,284.59 630.38,278.8 631.29,272.93 632.14,270.09 632.91,271.32 633.62,275.27 634.33,279.7 635.08,281.81 635.89,281.41 636.74,278.65 637.59,276.01 638.41,273.11 639.18,269.72 639.93,265.15 640.66,261.9 641.34,261.31 641.96,264.15 642.54,269.87 643.1,276.32 643.69,283.2 644.3,290.36 644.92,298.53 645.56,305.54 646.23,308.39 646.94,305.55 647.68,299.5 648.43,291.4 649.17,284.68 649.89,278.94 650.61,272.5 651.34,267.59 652.1,265.3 652.93,267.62 653.79,272.97 654.64,278.33 655.43,280.98 656.11,278.9 656.73,274.69 657.33,268.5 657.97,264.25 658.69,260.34 659.45,256.73 660.21,253.62 660.91,253.24 661.53,256.35 662.11,260.41 662.67,266.71 663.26,271.16 663.87,274.22 664.49,276.65 665.13,278.68 665.8,280.23 666.51,280.24 667.25,279.47 667.99,278.8 668.74,280.02 669.48,282.34 670.23,286.49 670.97,290.88 671.67,294.53 672.34,299.19 672.98,303.99 673.6,307.16 674.22,308.37 674.83,304.83 675.43,298.32 676.01,291.11 676.57,285.07 677.07,279.14 677.54,274.11 678.01,270.81 678.52,269.36 679.09,270.69 679.68,275.91 680.29,281.7 680.87,286.91 681.42,291.95 681.95,297.35 682.48,301.91 683.02,303.35 683.61,300.32 684.21,294.19 684.81,286.59 685.37,281.07 685.88,275.41 686.35,270.7 686.82,266.21 687.33,265.48 687.87,267.47 688.43,273.29 689.03,280.41 689.68,286.49 690.42,293.77 691.24,301.05 692.06,307.45 692.81,310.54 693.45,308.64 694.03,303.16 694.59,296.61 695.16,290.12 695.75,284.99 696.36,278.52 696.95,273.58 697.5,271.07 698.02,272.54 698.51,275.63 698.98,280.79 699.46,284.95 699.91,288.05 700.34,291.31 700.82,294.29 701.42,295.11 702.19,295.54 703.08,294.75 704.02,294.38 704.94,293.02 705.81,293.13 706.68,293 707.56,293.23 708.46,296.8 709.44,304.28 710.46,314.93 711.46,325.32 712.38,329.8 713.19,325.06 713.94,314.78 714.64,303.6 715.31,295.01 715.94,288.48 716.52,284.18 717.09,280.96 717.66,279.25 718.25,279.03 718.85,281.23 719.44,283.71 720.01,286.52 720.53,289.92 721.02,293.46 721.55,296.25 722.16,297.75 722.92,294.05 723.78,287.83 724.66,282.56 725.49,279.67 726.24,282.09 726.96,287.36 727.67,293.48 728.42,299.56 729.22,304.84 730.05,311.41 730.9,316.01 731.75,318.11 732.63,316.12 733.54,309.9 734.43,303.75 735.27,298.43 736.05,295.49 736.78,293.68 737.49,291.95 738.21,291.55 738.94,289.65 739.68,289.81 740.41,289.18 741.14,289.13 741.89,286.75 742.64,283.07 743.37,281.48 744.08,280.53 744.73,282.49 745.33,286.1 745.94,290.23 746.62,294.13 747.42,301.51 748.29,309.22 749.16,316.99 749.95,318.81 750.65,314.15 751.28,305.52 751.89,294.98 752.5,286.87 753.09,280.19 753.67,273.55 754.25,269.35 754.84,268.29 755.47,271.11 756.12,277.94 756.76,285.6 757.39,292.57 757.96,299.02 758.5,305.25 759.07,309.93 759.74,310.86 760.56,306.74 761.5,297.48 762.43,289.07 763.26,284.23 763.91,287.05 764.47,293.19 765.01,299.96 765.61,306.21 766.31,311.06 767.06,315.19 767.82,319.07 768.54,318.75 769.21,315.1 769.85,307.46 770.47,299.63 771.09,292.6 771.69,286.3 772.27,279.24 772.85,274.04 773.43,271.88 774.02,274.41 774.6,280.68 775.18,288.12 775.78,294.27 776.42,299.46 777.08,304.75 777.73,310.1 778.33,313.3 778.83,314.86 779.28,316.13 779.74,315.34 780.28,313.07 780.94,307.42 781.65,297.62 782.42,289.89 783.22,286.86 784.09,292.37 785.02,303.36 785.93,313.51 786.74,318.89 787.42,317.12 788.01,309.5 788.56,300.65 789.09,292.95 789.61,285.31 790.09,277.02 790.57,269.57 791.05,263.08 791.54,256.57 792.03,250.27 792.51,245.62 793,243.76 793.5,245.96 794.01,251.27 794.5,257.94 794.96,263.55 795.42,267.48 795.87,272.4 796.25,276.25 796.53,278.66" fill="none" stroke="#d62728" shape-rendering="crispEdges"/>
<path d="M479.5 233V338.5H797" fill="none" stroke="#a2a2a2" shape-rendering="crispEdges"/>
<text x="480.55" y="351.5" fill="#969696" letter-spacing="0.6">-20s</text>
<text x="559.55" y="351.5" fill="#969696" letter-spacing="0.6">-15s</text>
<text x="638.55" y="351.5" fill="#969696" letter-spacing="0.6">-10s</text>
<text x="717.55" y="351.5" fill="#969696" letter-spacing="0.6">-5s</text>
<text x="796.55" y="351.5" fill="#969696" letter-spacing="0.6">0</text>
<text x="475.6" y="273.9" fill="#969696" text-anchor="end" letter-spacing="0.65">8</text>
<text x="475.6" y="336" fill="#969696" text-anchor="end" letter-spacing="0.65">7</text>
<text x="638" y="222.8" fill="#f2f2f2" textLength="179" lengthAdjust="spacing">K1:VIS-ETMY_TM_WIT_Y_DQ</text>
<text x="429.5" y="287.3" fill="#f2f2f2" letter-spacing="0.35" transform="rotate(-90 429.5 287.3)">undef</text>
<g shape-rendering="crispEdges" stroke="#fff" fill="none"><path d="M409.5 396V502" stroke-opacity="0.075"/><path d="M394.5 396V502" stroke-opacity="0.05"/><path d="M378.5 396V502" stroke-opacity="0.05"/><path d="M363.5 396V502" stroke-opacity="0.05"/><path d="M347.5 396V502" stroke-opacity="0.05"/><path d="M331.5 396V502" stroke-opacity="0.075"/><path d="M316.5 396V502" stroke-opacity="0.05"/><path d="M300.5 396V502" stroke-opacity="0.05"/><path d="M285.5 396V502" stroke-opacity="0.05"/><path d="M269.5 396V502" stroke-opacity="0.05"/><path d="M254.5 396V502" stroke-opacity="0.075"/><path d="M238.5 396V502" stroke-opacity="0.05"/><path d="M222.5 396V502" stroke-opacity="0.05"/><path d="M207.5 396V502" stroke-opacity="0.05"/><path d="M191.5 396V502" stroke-opacity="0.05"/><path d="M176.5 396V502" stroke-opacity="0.075"/><path d="M160.5 396V502" stroke-opacity="0.05"/><path d="M145.5 396V502" stroke-opacity="0.05"/><path d="M129.5 396V502" stroke-opacity="0.05"/><path d="M113.5 396V502" stroke-opacity="0.05"/><path d="M98.5 396V502" stroke-opacity="0.075"/><path d="M89 410.5H410" stroke-opacity="0.035"/><path d="M89 439.5H410" stroke-opacity="0.035"/><path d="M89 468.5H410" stroke-opacity="0.035"/><path d="M89 497.5H410" stroke-opacity="0.035"/><path d="M89 424.5H410" stroke-opacity="0.075"/><path d="M89 453.5H410" stroke-opacity="0.075"/><path d="M89 483.5H410" stroke-opacity="0.075"/></g>
<path d="M91.5 430.9V461.63M92.5 435.1V464.38M93.5 433.84V462.38M94.5 421.74V462.95M95.5 433.82V473.7M96.5 412.73V473.7M97.5 412.73V464.58M98.5 423.48V476.2M99.5 428.27V476.97M100.5 427.73V475.17M101.5 426.78V476.35M102.5 441.68V466.44M103.5 425.97V475.9M104.5 423.24V475.9M105.5 418.87V480.16M106.5 416.51V480.93M107.5 416.51V467.81M108.5 426.19V469.76M109.5 424.52V467.9M110.5 427.09V467.87M111.5 427.09V459.74M112.5 437.02V455.42M113.5 436.21V473.37M114.5 440.64V475.23M115.5 430.49V469.41M116.5 430.26V473.01M117.5 427.91V473.26M118.5 427.91V466.74M119.5 442.1V468.46M120.5 432.02V466.47M121.5 431.75V477.3M122.5 440.48V477.82M123.5 424.39V481.36M124.5 423.52V470.57M125.5 441.17V479.56M126.5 439.23V470.25M127.5 435.86V459.62M128.5 435.12V460.65M129.5 436.96V467.69M130.5 440.39V489.84M131.5 441.38V492.77M132.5 441.67V474.83M133.5 442.35V471.19M134.5 446.69V483.95M135.5 433.32V470.47M136.5 429.18V470.23M137.5 426.41V467.96M138.5 443.74V474.79M139.5 427.95V467.61M140.5 439.07V473.06M141.5 445.98V472.39M142.5 438.07V468.73M143.5 437.68V473.56M144.5 437.25V474.23M145.5 434.91V480.02M146.5 431.6V468.59M147.5 443.97V468.59M148.5 438.22V456.35M149.5 438.57V464.5M150.5 434.05V459.44M151.5 425.41V468.07M152.5 442.67V461.47M153.5 426.93V460.8M154.5 428.5V462.48M155.5 439.05V471.49M156.5 437.49V473.21M157.5 424.61V464.21M158.5 444.65V464.23M159.5 435.52V461.47M160.5 434.72V467.3M161.5 430.16V470.92M162.5 432.61V489.29M163.5 441.07V489.76M164.5 432.88V470.15M165.5 437.6V465.78M166.5 422.1V471.25M167.5 420.28V471.33M168.5 426.18V483.43M169.5 447.24V467.98M170.5 438.08V467.08M171.5 432.44V478.05M172.5 431.6V480.74M173.5 434.35V455.45M174.5 435.41V474.22M175.5 428.2V474.22M176.5 426.71V469.06M177.5 428.21V474.7M178.5 428.21V467.97M179.5 436.56V463.43M180.5 442.24V464.85M181.5 442.44V467.7M182.5 406.21V467.7M183.5 421.06V458.72M184.5 419.1V460.28M185.5 419.1V461.39M186.5 423.86V467.44M187.5 420.6V461.22M188.5 433.5V462.17M189.5 437.87V459.69M190.5 423.97V468.5M191.5 423.59V470.34M192.5 426.38V463.17M193.5 438.16V456.49M194.5 422.82V469.09M195.5 443.07V467.89M196.5 431.72V486.54M197.5 420.61V474.7M198.5 420.61V477.5M199.5 435.21V477.75M200.5 433.42V465.5M201.5 443.99V466.39M202.5 444.96V468.15M203.5 446.57V469.45M204.5 439.73V475.82M205.5 426.52V471.78M206.5 438.84V471.78M207.5 442.03V479.4M208.5 438.91V468.96M209.5 434.66V479.86M210.5 448.92V472.78M211.5 447.85V466.94M212.5 436.74V482.83M213.5 443.28V475.13M214.5 441.23V481.3M215.5 425.96V484.65M216.5 424.24V486.01M217.5 437.01V467.82M218.5 437.01V468.66M219.5 441.99V470.13M220.5 431.01V469.35M221.5 435.81V469.99M222.5 437.77V470.92M223.5 434.42V477.34M224.5 432.21V478.88M225.5 442.7V474.06M226.5 441.96V465.71M227.5 446.81V465.78M228.5 439.58V468.81M229.5 437.11V462.2M230.5 442.88V473.69M231.5 431.49V473.94M232.5 421.37V465.65M233.5 420.38V459.76M234.5 445.8V466.6M235.5 431.89V459.89M236.5 431.89V467.84M237.5 434.29V468.31M238.5 432.87V468.31M239.5 432.87V476.07M240.5 439.81V479.29M241.5 432.77V475.68M242.5 404.43V460.1M243.5 410.96V473.17M244.5 432.91V481.97M245.5 431.02V482.09M246.5 431.59V469.49M247.5 444.19V469.49M248.5 421.91V470.35M249.5 423.31V458.98M250.5 428.28V469.12M251.5 447.88V464.21M252.5 429.56V460.36M253.5 432.58V471.94M254.5 441.51V468.68M255.5 435.45V466.38M256.5 430.32V466.44M257.5 427.71V471.6M258.5 427.09V474.51M259.5 433.73V464.96M260.5 433.73V476.79M261.5 431.82V463.72M262.5 426.53V469.33M263.5 426.53V468.35M264.5 431.91V462.94M265.5 417.36V470.38M266.5 416.43V471.77M267.5 416.43V472.1M268.5 422.23V472.1M269.5 423.78V470.78M270.5 423.44V470.78M271.5 423.44V466.93M272.5 435.11V460.36M273.5 420.79V459.56M274.5 423.01V465.92M275.5 425.78V466.72M276.5 429.11V485.77M277.5 434.11V485.98M278.5 434.56V465.98M279.5 428.85V471.58M280.5 432.92V469.73M281.5 438.21V458.85M282.5 408.04V467.98M283.5 432.56V474.28M284.5 437V475.65M285.5 423.9V479.53M286.5 429.92V466.73M287.5 431.99V463.55M288.5 427.67V490.06M289.5 424.88V479.75M290.5 422.08V479.75M291.5 425.17V470.44M292.5 425.05V474.14M293.5 413.6V478.23M294.5 413.13V478.34M295.5 424.92V475.77M296.5 440.94V469.88M297.5 441.75V459.04M298.5 435.73V461.78M299.5 439.27V465.52M300.5 436.38V465.56M301.5 438.69V465.08M302.5 442.53V469.34M303.5 432.41V467.85M304.5 432.14V469.13M305.5 436.21V463.03M306.5 442.58V468.61M307.5 437.08V468.61M308.5 441.1V479.18M309.5 427.58V463.03M310.5 427.21V468.14M311.5 439.67V469.69M312.5 434.81V465.98M313.5 436.64V463.6M314.5 433.47V465.57M315.5 433.43V461.79M316.5 427.88V465.25M317.5 426.69V458.96M318.5 435.08V455.42M319.5 432.57V457.31M320.5 414.55V466.18M321.5 436.74V464.89M322.5 435.78V453.5M323.5 440.71V472M324.5 430.69V463.61M325.5 427.95V463.61M326.5 425.22V476.14M327.5 428.59V476.77M328.5 425.13V459.01M329.5 430.8V464.07M330.5 424.1V468.09M331.5 423.99V470.88M332.5 430.76V454.47M333.5 430.02V472.81M334.5 427.93V464.68M335.5 419.41V468.74M336.5 418.95V471.34M337.5 425.99V463.35M338.5 424.43V463.06M339.5 422.78V465.45M340.5 427.16V471.66M341.5 422.32V457.33M342.5 420.35V456.69M343.5 424.22V474.65M344.5 422.94V474.69M345.5 422.94V464.39M346.5 429.4V463.29M347.5 427.76V465.05M348.5 430.57V466.18M349.5 428.45V468.86M350.5 439.82V475.79M351.5 445.17V469.05M352.5 442.93V467.5M353.5 437V463.02M354.5 434.75V463.95M355.5 440.1V467.72M356.5 436.22V481.29M357.5 435.73V468.23M358.5 437.28V473.52M359.5 441.16V473.52M360.5 447.58V466.65M361.5 441.49V468.33M362.5 440.64V467.71M363.5 442.28V465.84M364.5 433.4V465.84M365.5 435.28V469.7M366.5 433.19V468.18M367.5 435.5V470.28M368.5 435.46V470.28M369.5 432.42V474.32M370.5 431.59V477.28M371.5 424.25V471.83M372.5 422.9V473.38M373.5 427.56V473.38M374.5 434.15V472.08M375.5 433.72V472.35M376.5 438.42V461.29M377.5 415.37V486.09M378.5 431.25V488.47M379.5 430.35V464.87M380.5 433.86V478.34M381.5 432.74V478.34M382.5 432.06V469.36M383.5 434.63V489.72M384.5 422.19V489.72M385.5 422.19V462.45M386.5 447.83V463.35M387.5 422.23V481.3M388.5 432.27V477.13M389.5 431.17V478.14M390.5 429.94V480.98M391.5 435.59V463.19M392.5 421.59V467M393.5 421.59V469.03M394.5 444.82V471.3M395.5 437.67V460.9M396.5 439.42V472.45M397.5 440.13V472.89M398.5 437.2V466.48M399.5 436.16V461.27M400.5 430.3V469.72M401.5 428.69V462.72M402.5 432.33V469.86M403.5 430.5V472.76M404.5 440.01V462M405.5 431.59V465.46M406.5 435.83V468.82M407.5 433.85V466.55M408.5 426.58V478.1M409.5 424.77V457.93" fill="none" stroke="#9467bd"/>
<path d="M88.5 396V502.5H410" fill="none" stroke="#a2a2a2" shape-rendering="crispEdges"/>
<text x="98.4" y="514.9" fill="#969696" letter-spacing="0.6">-20s</text>
<text x="176.25" y="514.9" fill="#969696" letter-spacing="0.6">-15s</text>
<text x="254.1" y="514.9" fill="#969696" letter-spacing="0.6">-10s</text>
<text x="331.95" y="514.9" fill="#969696" letter-spacing="0.6">-5s</text>
<text x="409.8" y="514.9" fill="#969696" letter-spacing="0.6">0</text>
<text x="84.6" y="428.8" fill="#969696" text-anchor="end" letter-spacing="0.65">-2.12</text>
<text x="84.6" y="458.1" fill="#969696" text-anchor="end" letter-spacing="0.65">-2.14</text>
<text x="84.6" y="487.4" fill="#969696" text-anchor="end" letter-spacing="0.65">-2.16</text>
<text x="249" y="385.8" fill="#f2f2f2" textLength="161" lengthAdjust="spacing">K1:VIS-BS_TM_WIT_P_DQ</text>
<text x="42.4" y="450.8" fill="#f2f2f2" letter-spacing="0.35" transform="rotate(-90 42.4 450.8)">undef</text>
<g shape-rendering="crispEdges" stroke="#fff" fill="none"><path d="M796.5 396V502" stroke-opacity="0.075"/><path d="M780.5 396V502" stroke-opacity="0.05"/><path d="M765.5 396V502" stroke-opacity="0.05"/><path d="M749.5 396V502" stroke-opacity="0.05"/><path d="M734.5 396V502" stroke-opacity="0.05"/><path d="M718.5 396V502" stroke-opacity="0.075"/><path d="M703.5 396V502" stroke-opacity="0.05"/><path d="M687.5 396V502" stroke-opacity="0.05"/><path d="M671.5 396V502" stroke-opacity="0.05"/><path d="M656.5 396V502" stroke-opacity="0.05"/><path d="M640.5 396V502" stroke-opacity="0.075"/><path d="M625.5 396V502" stroke-opacity="0.05"/><path d="M609.5 396V502" stroke-opacity="0.05"/><path d="M594.5 396V502" stroke-opacity="0.05"/><path d="M578.5 396V502" stroke-opacity="0.05"/><path d="M562.5 396V502" stroke-opacity="0.075"/><path d="M547.5 396V502" stroke-opacity="0.05"/><path d="M531.5 396V502" stroke-opacity="0.05"/><path d="M516.5 396V502" stroke-opacity="0.05"/><path d="M500.5 396V502" stroke-opacity="0.05"/><path d="M484.5 396V502" stroke-opacity="0.075"/><path d="M484 417.5H797" stroke-opacity="0.035"/><path d="M484 446.5H797" stroke-opacity="0.035"/><path d="M484 474.5H797" stroke-opacity="0.035"/><path d="M484 403.5H797" stroke-opacity="0.075"/><path d="M484 431.5H797" stroke-opacity="0.075"/><path d="M484 460.5H797" stroke-opacity="0.075"/><path d="M484 489.5H797" stroke-opacity="0.075"/></g>
<path d="M484.5 426.09V476.13M485.5 423.74V462.22M486.5 420.33V466.59M487.5 419.71V445.75M488.5 421.69V457.54M489.5 419.96V458.76M490.5 420.03V460.4M491.5 420.03V466.57M492.5 424.06V466.57M493.5 429.54V461.66M494.5 428.02V463.06M495.5 414.8V465.26M496.5 421.19V462.78M497.5 409.19V454.22M498.5 429.46V459.97M499.5 414.85V456.71M500.5 419.77V458.16M501.5 410.24V459.95M502.5 420.4V455.39M503.5 426.23V448.1M504.5 419.75V461.3M505.5 417.37V463.6M506.5 415.21V451.44M507.5 415.21V455.27M508.5 418.52V456.66M509.5 427.15V450.74M510.5 426.21V446.93M511.5 428.11V447.6M512.5 423.1V446.36M513.5 423.1V447.17M514.5 424.41V450.06M515.5 414.04V453.27M516.5 412.61V455.82M517.5 425.63V449.59M518.5 425.65V448.77M519.5 429.66V452.88M520.5 423.49V448.1M521.5 422.47V449.75M522.5 422.78V446.7M523.5 430.84V451.27M524.5 423.54V447.43M525.5 420.33V455.43M526.5 430.88V455.43M527.5 426.6V444.62M528.5 427.25V450.08M529.5 430.33V451.59M530.5 431.18V442.07M531.5 429.79V451.42M532.5 432.95V455.29M533.5 432.7V447.11M534.5 427.92V461.95M535.5 436.82V450.29M536.5 435.36V450.67M537.5 432.79V453.51M538.5 434.29V453.85M539.5 430.03V457.76M540.5 430.03V461.39M541.5 423.45V461.39M542.5 433.14V460.24M543.5 429.35V462.09M544.5 425.83V454.82M545.5 427.35V465.99M546.5 434.43V461.78M547.5 440.5V464.28M548.5 433.05V458.36M549.5 436.17V464.21M550.5 425.83V459.52M551.5 425.83V456.82M552.5 437.15V462.33M553.5 441.29V464.41M554.5 436.96V451.56M555.5 436.96V458.51M556.5 438.62V459.85M557.5 436.65V456.38M558.5 438.44V462.19M559.5 436.99V462.19M560.5 436.99V456.15M561.5 437.75V458.52M562.5 434.07V465M563.5 434.07V465.03M564.5 438.79V461.12M565.5 437.64V462.05M566.5 436.3V462.05M567.5 437.98V456.57M568.5 438.62V454.39M569.5 438.62V452.5M570.5 436.84V452.4M571.5 434.77V456.57M572.5 432.09V459.15M573.5 439.88V452.63M574.5 437.65V450.29M575.5 430.2V462.92M576.5 430.2V455.13M577.5 433.48V459.8M578.5 432.01V461.8M579.5 436V450.59M580.5 431.61V450.74M581.5 430.95V451.93M582.5 436.1V449.42M583.5 431.32V449.89M584.5 431.32V453.37M585.5 436.61V454.21M586.5 434.58V455.81M587.5 432.77V443.91M588.5 432.03V450.37M589.5 427.81V448.93M590.5 428.98V452.78M591.5 430.73V450.26M592.5 430.58V449.42M593.5 432.67V452.7M594.5 431.33V450.65M595.5 429.57V452.89M596.5 432.8V448.16M597.5 424.44V454.62M598.5 424.26V455.4M599.5 421.71V448.47M600.5 421.46V448.86M601.5 428.95V445.35M602.5 430.21V447.48M603.5 423.65V443.55M604.5 421.47V445.08M605.5 425.16V436.91M606.5 420.68V446.84M607.5 426.9V445.72M608.5 426.9V455M609.5 420.89V443.28M610.5 419V441.96M611.5 423.21V433.25M612.5 421.22V446.08M613.5 423.69V435.69M614.5 414.47V443.41M615.5 419.43V438.08M616.5 418.26V439.66M617.5 420.05V439.66M618.5 413.55V433.15M619.5 414.22V441.6M620.5 416.12V432.36M621.5 415.97V430.05M622.5 415.73V439.16M623.5 418.22V436.56M624.5 410.46V437.97M625.5 409.76V438.26M626.5 419.75V437.14M627.5 419.02V433.47M628.5 413.87V425.7M629.5 418.15V436.59M630.5 418.12V437.75M631.5 416.07V435.08M632.5 413.44V435.79M633.5 418.47V438.46M634.5 417.93V431.08M635.5 416.09V436M636.5 419.62V432.12M637.5 417.95V434.26M638.5 422.44V430.32M639.5 420.19V434.1M640.5 421.85V436.84M641.5 420.38V444.16M642.5 419.57V444.34M643.5 420.93V443.8M644.5 417.02V434.37M645.5 420.89V443.7M646.5 425.75V445.17M647.5 416.86V447M648.5 419.87V447.57M649.5 417.5V456.05M650.5 406.09V449.08M651.5 418.17V458.48M652.5 419.88V458.48M653.5 421.06V449.38M654.5 428V451.39M655.5 427.93V463.43M656.5 427.75V450.58M657.5 423.39V467.09M658.5 428.96V454.64M659.5 417.08V465.16M660.5 430.17V459.03M661.5 423.81V460.57M662.5 422.46V460.99M663.5 419.72V460.99M664.5 420.35V452.31M665.5 425.47V452.14M666.5 431.83V452.41M667.5 431.82V450.17M668.5 427.03V451.33M669.5 428.89V450.37M670.5 435.53V452.92M671.5 425.22V452.92M672.5 432.79V454.87M673.5 432.98V454.87M674.5 423.17V452.73M675.5 420.9V454.96M676.5 431.19V447.21M677.5 426.25V441.92M678.5 425.15V444.41M679.5 420.89V447.3M680.5 423.32V452.81M681.5 421.11V457.27M682.5 424.24V447.57M683.5 420.71V454.13M684.5 415.11V454.13M685.5 422.53V448.44M686.5 423.2V446M687.5 421.41V442.39M688.5 416.83V433.88M689.5 420.7V450.13M690.5 420.7V448.24M691.5 418.38V441.2M692.5 421.43V441.3M693.5 421.57V441.5M694.5 425.83V448.76M695.5 424.69V451.29M696.5 420.67V444.93M697.5 422.55V445.35M698.5 411.84V439.07M699.5 414.51V439.42M700.5 424.17V440.65M701.5 415.55V438.65M702.5 416.92V439.66M703.5 418.68V436.01M704.5 418.95V434.63M705.5 421.45V440.75M706.5 416.81V437.67M707.5 415V440.63M708.5 413.76V443.16M709.5 422.07V441.21M710.5 420.05V441.73M711.5 411.4V439.93M712.5 410.69V442.91M713.5 412.35V442.91M714.5 410.39V443.29M715.5 420.05V442.53M716.5 423.95V444.15M717.5 421.76V435.62M718.5 418.51V439.78M719.5 417.4V437.01M720.5 418.2V439.6M721.5 417.74V445.06M722.5 409.99V443.85M723.5 417.12V438.84M724.5 402.89V445.54M725.5 402.64V447.49M726.5 415.96V438.64M727.5 413.53V438.32M728.5 414.51V435.86M729.5 414.51V443.49M730.5 415.9V439.21M731.5 415.09V432.95M732.5 404.65V443.54M733.5 415.61V442.39M734.5 415.39V442.15M735.5 413.14V431.31M736.5 412.52V442.99M737.5 414.78V440.96M738.5 422.64V442.42M739.5 412.71V443.75M740.5 422.09V441.04M741.5 416.61V451.52M742.5 407.9V446.26M743.5 417.26V446.26M744.5 415.05V452.19M745.5 413.42V446.33M746.5 408.41V448.09M747.5 406.88V446.02M748.5 420.28V450.41M749.5 420.02V447.24M750.5 418.85V444.01M751.5 423.63V450.79M752.5 415.28V449.62M753.5 413.6V450.07M754.5 418.89V449.78M755.5 418.73V446.14M756.5 416.97V456.38M757.5 414.18V456.81M758.5 426.69V455.74M759.5 430.28V453.17M760.5 432.03V457.93M761.5 432.03V454.77M762.5 431.44V456.11M763.5 433.89V451.26M764.5 432.78V457.42M765.5 428.97V450.77M766.5 431.18V452.05M767.5 430.78V457.83M768.5 433.78V459.69M769.5 431.51V468.38M770.5 437.6V468.9M771.5 429.2V468.12M772.5 428.69V468.13M773.5 440.71V466.87M774.5 439.73V472.79M775.5 436.48V472.27M776.5 443.73V474.21M777.5 443.73V459.89M778.5 442.78V475.05M779.5 438.94V471.04M780.5 441.64V471.34M781.5 441.02V468.62M782.5 440.3V473.43M783.5 440.3V474.8M784.5 438.95V476.69M785.5 448.96V468.11M786.5 443.95V475.54M787.5 444.69V460.87M788.5 443.93V469.32M789.5 447.84V469.32M790.5 444.01V464.32M791.5 443.89V464.77M792.5 443.89V465.81M793.5 447.14V463.17M794.5 448.2V469.13M795.5 438.12V467.94M796.5 444.53V467.94" fill="none" stroke="#8c564b"/>
<path d="M483.5 396V502.5H797" fill="none" stroke="#a2a2a2" shape-rendering="crispEdges"/>
<text x="484.95" y="514.9" fill="#969696" letter-spacing="0.6">-20s</text>
<text x="562.85" y="514.9" fill="#969696" letter-spacing="0.6">-15s</text>
<text x="640.75" y="514.9" fill="#969696" letter-spacing="0.6">-10s</text>
<text x="718.65" y="514.9" fill="#969696" letter-spacing="0.6">-5s</text>
<text x="796.55" y="514.9" fill="#969696" letter-spacing="0.6">0</text>
<text x="479.6" y="407.5" fill="#969696" text-anchor="end" letter-spacing="0.65">-13.78</text>
<text x="479.6" y="436.2" fill="#969696" text-anchor="end" letter-spacing="0.65">-13.8</text>
<text x="479.6" y="464.9" fill="#969696" text-anchor="end" letter-spacing="0.65">-13.82</text>
<text x="479.6" y="493.6" fill="#969696" text-anchor="end" letter-spacing="0.65">-13.84</text>
<text x="640" y="385.8" fill="#f2f2f2" textLength="161" lengthAdjust="spacing">K1:VIS-BS_TM_WIT_Y_DQ</text>
<text x="429.5" y="450.8" fill="#f2f2f2" letter-spacing="0.35" transform="rotate(-90 429.5 450.8)">undef</text>
<text x="413" y="557" fill="#ffffff" font-size="16" textLength="446.5" lengthAdjust="spacing">t0 = Fri Nov 04 2022 19:38:16 UTC [1351625914.6250]</text>
<g shape-rendering="crispEdges" stroke="#fff" fill="none"><path d="M1247.5 72V259" stroke-opacity="0.11"/><path d="M1228.5 72V259" stroke-opacity="0.085"/><path d="M1210.5 72V259" stroke-opacity="0.085"/><path d="M1191.5 72V259" stroke-opacity="0.085"/><path d="M1172.5 72V259" stroke-opacity="0.085"/><path d="M1153.5 72V259" stroke-opacity="0.11"/><path d="M1135.5 72V259" stroke-opacity="0.085"/><path d="M1116.5 72V259" stroke-opacity="0.085"/><path d="M1097.5 72V259" stroke-opacity="0.085"/><path d="M1079.5 72V259" stroke-opacity="0.085"/><path d="M1060.5 72V259" stroke-opacity="0.11"/><path d="M1041.5 72V259" stroke-opacity="0.085"/><path d="M1022.5 72V259" stroke-opacity="0.085"/><path d="M1004.5 72V259" stroke-opacity="0.085"/><path d="M985.5 72V259" stroke-opacity="0.085"/><path d="M966.5 72V259" stroke-opacity="0.11"/><path d="M948 88.5H1248" stroke-opacity="0.03"/><path d="M948 122.5H1248" stroke-opacity="0.03"/><path d="M948 155.5H1248" stroke-opacity="0.03"/><path d="M948 188.5H1248" stroke-opacity="0.03"/><path d="M948 221.5H1248" stroke-opacity="0.03"/><path d="M948 254.5H1248" stroke-opacity="0.03"/><path d="M948 72.5H1248" stroke-opacity="0.085"/><path d="M948 105.5H1248" stroke-opacity="0.085"/><path d="M948 138.5H1248" stroke-opacity="0.085"/><path d="M948 171.5H1248" stroke-opacity="0.085"/><path d="M948 205.5H1248" stroke-opacity="0.085"/><path d="M948 238.5H1248" stroke-opacity="0.085"/></g>
<path d="M948 138.5H1141" stroke="#1f77b4" shape-rendering="crispEdges"/>
<polyline points="1141,137.54 1141.5,125.92 1142,99.64 1142.5,90.74 1143,116.35 1143.5,138.07 1144,139.42 1144.5,151.65 1145,169.04 1145.5,166.85 1146,145.06 1146.5,128.5 1147,121.88 1147.5,115.98 1148,112.89 1148.5,125.86 1149,153.69 1149.5,165.57 1150,140.38 1150.5,112.27 1151,109.65 1151.5,136.96 1152,177.47 1152.5,192.37 1153,172.15 1153.5,135.32 1154,117.34 1154.5,127.16 1155,153.03 1155.5,161.6 1156,164.3 1156.5,194.5 1157,179.1 1157.5,166.45 1158,150.82 1158.5,118.34 1159,105.51 1159.5,121.88 1160,138.25 1160.5,132.75 1161,124.04 1161.5,138.24 1162,173.03 1162.5,185.64 1163,163.36 1163.5,133.5 1164,125.41 1164.5,139.1 1165,166.62 1165.5,177.86 1166,153.96 1166.5,112.97 1167,88.17 1167.5,98.22 1168,129.83 1168.5,161.35 1169,195.86 1169.5,240 1170,233.03 1170.5,182.11 1171,146.87 1171.5,140.94 1172,145.59 1172.5,138.18 1173,122.87 1173.5,119.48 1174,138.84 1174.5,173.68 1175,213.45 1175.5,219.54 1176,169.09 1176.5,158.79 1177,161.9 1177.5,150.44 1178,147.6 1178.5,160.83 1179,153.84 1179.5,104.74 1180,85 1180.5,85.65 1181,104.29 1181.5,146.01 1182,177.05 1182.5,165.99 1183,127.92 1183.5,106.89 1184,123.17 1184.5,164.53 1185,181.43 1185.5,155.13 1186,130.4 1186.5,138.18 1187,163.71 1187.5,171.18 1188,190.69 1188.5,195.99 1189,160.86 1189.5,151.53 1190,139.14 1190.5,127.28 1191,128.35 1191.5,134.83 1192,131.52 1192.5,120 1193,113.56 1193.5,119.21 1194,136.25 1194.5,166.38 1195,191.2 1195.5,187.6 1196,153.12 1196.5,122.27 1197,119.02 1197.5,137.03 1198,156.54 1198.5,156.32 1199,139.69 1199.5,120.8 1200,106.96 1200.5,112.21 1201,138.7 1201.5,168.57 1202,163.98 1202.5,138.09 1203,133.34 1203.5,146 1204,117.14 1204.5,86 1205,94.28 1205.5,103.05 1206,126.97 1206.5,141.45 1207,137.32 1207.5,137.43 1208,156.35 1208.5,174.14 1209,167.07 1209.5,141.23 1210,126.51 1210.5,133.72 1211,161.65 1211.5,181.13 1212,160.94 1212.5,112.79 1213,80.33 1213.5,92.95 1214,135.99 1214.5,167.83 1215,153.88 1215.5,130.64 1216,131.46 1216.5,146.3 1217,148.48 1217.5,137.83 1218,137.28 1218.5,148.15 1219,152.43 1219.5,147.12 1220,148.36 1220.5,157.79 1221,156.75 1221.5,139.04 1222,125.98 1222.5,124.97 1223,128.75 1223.5,129.36 1224,131.4 1224.5,137.9 1225,138.7 1225.5,126.05 1226,110.24 1226.5,101.38 1227,91 1227.5,124.42 1228,181.19 1228.5,183.84 1229,144.73 1229.5,109.24 1230,104.71 1230.5,134.2 1231,165.86 1231.5,151.96 1232,118.24 1232.5,112.98 1233,142.61 1233.5,171.68 1234,158.73 1234.5,132.1 1235,130.88 1235.5,150.06 1236,158.02 1236.5,141.06 1237,124.44 1237.5,119.94 1238,122.31 1238.5,122.15 1239,119.26 1239.5,120.81 1240,134.73 1240.5,167.64 1241,198.23 1241.5,194.23 1242,151.22 1242.5,123.65 1243,164.71 1243.5,213.71 1244,203.49 1244.5,167.68 1245,128.54 1245.5,113.7 1246,113.28 1246.5,116.98 1247,126.8 1247.5,144" fill="none" stroke="#1f77b4" shape-rendering="crispEdges"/>
<path d="M947.5 72V259.5H1248" fill="none" stroke="#a2a2a2" shape-rendering="crispEdges"/>
<text x="966.65" y="272" fill="#969696" letter-spacing="0.6">-15s</text>
<text x="1060.3" y="272" fill="#969696" letter-spacing="0.6">-10s</text>
<text x="1153.95" y="272" fill="#969696" letter-spacing="0.6">-5s</text>
<text x="1247.6" y="272" fill="#969696" letter-spacing="0.6">0</text>
<text x="943.6" y="76.7" fill="#969696" text-anchor="end" letter-spacing="0.65">20000</text>
<text x="943.6" y="109.9" fill="#969696" text-anchor="end" letter-spacing="0.65">10000</text>
<text x="943.6" y="143" fill="#969696" text-anchor="end" letter-spacing="0.65">0</text>
<text x="943.6" y="176.2" fill="#969696" text-anchor="end" letter-spacing="0.65">-10000</text>
<text x="943.6" y="209.4" fill="#969696" text-anchor="end" letter-spacing="0.65">-20000</text>
<text x="943.6" y="242.7" fill="#969696" text-anchor="end" letter-spacing="0.65">-30000</text>
<text x="1097.5" y="61.8" fill="#f2f2f2" textLength="258" lengthAdjust="spacing">K1:VIS-ITMY_TM_COILOUTF_H1_OUTPUT</text>
<text x="880.3" y="167.3" fill="#f2f2f2" letter-spacing="0.35" transform="rotate(-90 880.3 167.3)">undef</text>
<g shape-rendering="crispEdges" stroke="#fff" fill="none"><path d="M1634.5 72V259" stroke-opacity="0.11"/><path d="M1615.5 72V259" stroke-opacity="0.085"/><path d="M1597.5 72V259" stroke-opacity="0.085"/><path d="M1578.5 72V259" stroke-opacity="0.085"/><path d="M1559.5 72V259" stroke-opacity="0.085"/><path d="M1540.5 72V259" stroke-opacity="0.11"/><path d="M1522.5 72V259" stroke-opacity="0.085"/><path d="M1503.5 72V259" stroke-opacity="0.085"/><path d="M1484.5 72V259" stroke-opacity="0.085"/><path d="M1466.5 72V259" stroke-opacity="0.085"/><path d="M1447.5 72V259" stroke-opacity="0.11"/><path d="M1428.5 72V259" stroke-opacity="0.085"/><path d="M1409.5 72V259" stroke-opacity="0.085"/><path d="M1391.5 72V259" stroke-opacity="0.085"/><path d="M1372.5 72V259" stroke-opacity="0.085"/><path d="M1353.5 72V259" stroke-opacity="0.11"/><path d="M1335 75.5H1635" stroke-opacity="0.03"/><path d="M1335 109.5H1635" stroke-opacity="0.03"/><path d="M1335 142.5H1635" stroke-opacity="0.03"/><path d="M1335 175.5H1635" stroke-opacity="0.03"/><path d="M1335 209.5H1635" stroke-opacity="0.03"/><path d="M1335 242.5H1635" stroke-opacity="0.03"/><path d="M1335 92.5H1635" stroke-opacity="0.085"/><path d="M1335 125.5H1635" stroke-opacity="0.085"/><path d="M1335 159.5H1635" stroke-opacity="0.085"/><path d="M1335 192.5H1635" stroke-opacity="0.085"/><path d="M1335 225.5H1635" stroke-opacity="0.085"/></g>
<path d="M1335 192.5H1528" stroke="#ff7f0e" shape-rendering="crispEdges"/>
<polyline points="1528,192.51 1528.5,193.59 1529,196.54 1529.5,214 1530,240.01 1530.5,228.8 1531,208.97 1531.5,209.66 1532,214.76 1532.5,197.2 1533,157.52 1533.5,130.27 1534,149.9 1534.5,201.5 1535,235.38 1535.5,222.62 1536,193.41 1536.5,185.18 1537,196.35 1537.5,208.73 1538,212.85 1538.5,211.91 1539,206.88 1539.5,198.17 1540,190.54 1540.5,185.85 1541,188.05 1541.5,216.85 1542,233.78 1542.5,212.36 1543,205.24 1543.5,194.14 1544,181.5 1544.5,181.31 1545,187.58 1545.5,187.19 1546,185.74 1546.5,196.07 1547,210.64 1547.5,209.05 1548,198.25 1548.5,205.26 1549,230.16 1549.5,236.74 1550,202.68 1550.5,157.53 1551,139.75 1551.5,158.89 1552,192.8 1552.5,216.61 1553,213.64 1553.5,190.36 1554,171.01 1554.5,173.76 1555,193.85 1555.5,193.7 1556,132.28 1556.5,85.3 1557,129.31 1557.5,185.46 1558,187.5 1558.5,172.07 1559,174.7 1559.5,195.5 1560,210.75 1560.5,207.79 1561,201.91 1561.5,197.33 1562,162.69 1562.5,110.12 1563,115.92 1563.5,163.62 1564,197.54 1564.5,199.25 1565,187.61 1565.5,185.23 1566,198.43 1566.5,219.57 1567,237.55 1567.5,245 1568,203.15 1568.5,148.5 1569,152 1569.5,195.71 1570,233.3 1570.5,225.83 1571,193.11 1571.5,181.14 1572,196.25 1572.5,212.78 1573,212.28 1573.5,208.24 1574,210.46 1574.5,197.69 1575,151.87 1575.5,127 1576,142.19 1576.5,165.64 1577,178.26 1577.5,186.41 1578,196.77 1578.5,202.11 1579,194.56 1579.5,183.16 1580,179.21 1580.5,183.21 1581,190.34 1581.5,200.99 1582,211.56 1582.5,210.69 1583,199.02 1583.5,198.58 1584,220.62 1584.5,236.71 1585,211.4 1585.5,161.2 1586,136.21 1586.5,158.04 1587,197.26 1587.5,214.72 1588,202.65 1588.5,185.51 1589,177.95 1589.5,179.37 1590,189.03 1590.5,207.42 1591,228.75 1591.5,244.31 1592,232.8 1592.5,202.81 1593,185.13 1593.5,173.9 1594,173.6 1594.5,189.71 1595,209.57 1595.5,213.7 1596,206.55 1596.5,202.85 1597,199.15 1597.5,184.81 1598,170.97 1598.5,178.44 1599,202.66 1599.5,211.12 1600,190.78 1600.5,174.42 1601,187 1601.5,215.62 1602,221.63 1602.5,194.17 1603,161.52 1603.5,147.89 1604,161.62 1604.5,192.84 1605,221.82 1605.5,223.23 1606,200.21 1606.5,183.07 1607,189.88 1607.5,208.96 1608,216.42 1608.5,212.63 1609,212.06 1609.5,210.43 1610,191.78 1610.5,165.53 1611,155.37 1611.5,168.32 1612,183.84 1612.5,187.96 1613,192.71 1613.5,213.14 1614,234.68 1614.5,236.28 1615,197.74 1615.5,176.9 1616,194.13 1616.5,214.02 1617,215.4 1617.5,204.11 1618,194.99 1618.5,198.96 1619,216.03 1619.5,228.52 1620,211.92 1620.5,170.49 1621,142.13 1621.5,155.23 1622,192.93 1622.5,213.75 1623,199.5 1623.5,180.26 1624,178.07 1624.5,184.95 1625,189.35 1625.5,197.57 1626,214.65 1626.5,223.96 1627,210.25 1627.5,185.89 1628,173.44 1628.5,174.72 1629,178.73 1629.5,172.91 1630,139.62 1630.5,118.92 1631,168.57 1631.5,200.26 1632,193.17 1632.5,179.59 1633,171.27 1633.5,178.89 1634,201.26 1634.5,213.88" fill="none" stroke="#ff7f0e" shape-rendering="crispEdges"/>
<path d="M1334.5 72V259.5H1635" fill="none" stroke="#a2a2a2" shape-rendering="crispEdges"/>
<text x="1353.65" y="272" fill="#969696" letter-spacing="0.6">-15s</text>
<text x="1447.3" y="272" fill="#969696" letter-spacing="0.6">-10s</text>
<text x="1540.95" y="272" fill="#969696" letter-spacing="0.6">-5s</text>
<text x="1634.6" y="272" fill="#969696" letter-spacing="0.6">0</text>
<text x="1330.6" y="96.7" fill="#969696" text-anchor="end" letter-spacing="0.65">30000</text>
<text x="1330.6" y="130.1" fill="#969696" text-anchor="end" letter-spacing="0.65">20000</text>
<text x="1330.6" y="163.5" fill="#969696" text-anchor="end" letter-spacing="0.65">10000</text>
<text x="1330.6" y="196.8" fill="#969696" text-anchor="end" letter-spacing="0.65">0</text>
<text x="1330.6" y="230.3" fill="#969696" text-anchor="end" letter-spacing="0.65">-10000</text>
<text x="1484.5" y="61.8" fill="#f2f2f2" textLength="258" lengthAdjust="spacing">K1:VIS-ITMY_TM_COILOUTF_H2_OUTPUT</text>
<text x="1267.3" y="167.3" fill="#f2f2f2" letter-spacing="0.35" transform="rotate(-90 1267.3 167.3)">undef</text>
<g shape-rendering="crispEdges" stroke="#fff" fill="none"><path d="M1247.5 317V504" stroke-opacity="0.11"/><path d="M1228.5 317V504" stroke-opacity="0.085"/><path d="M1210.5 317V504" stroke-opacity="0.085"/><path d="M1191.5 317V504" stroke-opacity="0.085"/><path d="M1172.5 317V504" stroke-opacity="0.085"/><path d="M1153.5 317V504" stroke-opacity="0.11"/><path d="M1135.5 317V504" stroke-opacity="0.085"/><path d="M1116.5 317V504" stroke-opacity="0.085"/><path d="M1097.5 317V504" stroke-opacity="0.085"/><path d="M1079.5 317V504" stroke-opacity="0.085"/><path d="M1060.5 317V504" stroke-opacity="0.11"/><path d="M1041.5 317V504" stroke-opacity="0.085"/><path d="M1022.5 317V504" stroke-opacity="0.085"/><path d="M1004.5 317V504" stroke-opacity="0.085"/><path d="M985.5 317V504" stroke-opacity="0.085"/><path d="M966.5 317V504" stroke-opacity="0.11"/><path d="M948 325.5H1248" stroke-opacity="0.03"/><path d="M948 336.5H1248" stroke-opacity="0.03"/><path d="M948 346.5H1248" stroke-opacity="0.03"/><path d="M948 367.5H1248" stroke-opacity="0.03"/><path d="M948 378.5H1248" stroke-opacity="0.03"/><path d="M948 389.5H1248" stroke-opacity="0.03"/><path d="M948 399.5H1248" stroke-opacity="0.03"/><path d="M948 421.5H1248" stroke-opacity="0.03"/><path d="M948 431.5H1248" stroke-opacity="0.03"/><path d="M948 442.5H1248" stroke-opacity="0.03"/><path d="M948 452.5H1248" stroke-opacity="0.03"/><path d="M948 474.5H1248" stroke-opacity="0.03"/><path d="M948 484.5H1248" stroke-opacity="0.03"/><path d="M948 495.5H1248" stroke-opacity="0.03"/><path d="M948 357.5H1248" stroke-opacity="0.085"/><path d="M948 410.5H1248" stroke-opacity="0.085"/><path d="M948 463.5H1248" stroke-opacity="0.085"/></g>
<path d="M948 410.5H1248" stroke="#2ca02c" shape-rendering="crispEdges"/>
<path d="M947.5 317V504.5H1248" fill="none" stroke="#a2a2a2" shape-rendering="crispEdges"/>
<text x="966.65" y="517" fill="#969696" letter-spacing="0.6">-15s</text>
<text x="1060.3" y="517" fill="#969696" letter-spacing="0.6">-10s</text>
<text x="1153.95" y="517" fill="#969696" letter-spacing="0.6">-5s</text>
<text x="1247.6" y="517" fill="#969696" letter-spacing="0.6">0</text>
<text x="943.6" y="361.7" fill="#969696" text-anchor="end" letter-spacing="0.65">1e-38</text>
<text x="943.6" y="414.8" fill="#969696" text-anchor="end" letter-spacing="0.65">0</text>
<text x="943.6" y="467.9" fill="#969696" text-anchor="end" letter-spacing="0.65">-1e-38</text>
<text x="1097.5" y="307.2" fill="#f2f2f2" textLength="258" lengthAdjust="spacing">K1:VIS-ITMY_TM_COILOUTF_H3_OUTPUT</text>
<text x="880.3" y="412.3" fill="#f2f2f2" letter-spacing="0.35" transform="rotate(-90 880.3 412.3)">undef</text>
<g shape-rendering="crispEdges" stroke="#fff" fill="none"><path d="M1634.5 317V504" stroke-opacity="0.11"/><path d="M1615.5 317V504" stroke-opacity="0.085"/><path d="M1597.5 317V504" stroke-opacity="0.085"/><path d="M1578.5 317V504" stroke-opacity="0.085"/><path d="M1559.5 317V504" stroke-opacity="0.085"/><path d="M1540.5 317V504" stroke-opacity="0.11"/><path d="M1522.5 317V504" stroke-opacity="0.085"/><path d="M1503.5 317V504" stroke-opacity="0.085"/><path d="M1484.5 317V504" stroke-opacity="0.085"/><path d="M1466.5 317V504" stroke-opacity="0.085"/><path d="M1447.5 317V504" stroke-opacity="0.11"/><path d="M1428.5 317V504" stroke-opacity="0.085"/><path d="M1409.5 317V504" stroke-opacity="0.085"/><path d="M1391.5 317V504" stroke-opacity="0.085"/><path d="M1372.5 317V504" stroke-opacity="0.085"/><path d="M1353.5 317V504" stroke-opacity="0.11"/><path d="M1335 347.5H1635" stroke-opacity="0.03"/><path d="M1335 389.5H1635" stroke-opacity="0.03"/><path d="M1335 431.5H1635" stroke-opacity="0.03"/><path d="M1335 473.5H1635" stroke-opacity="0.03"/><path d="M1335 326.5H1635" stroke-opacity="0.085"/><path d="M1335 368.5H1635" stroke-opacity="0.085"/><path d="M1335 410.5H1635" stroke-opacity="0.085"/><path d="M1335 452.5H1635" stroke-opacity="0.085"/><path d="M1335 494.5H1635" stroke-opacity="0.085"/></g>
<path d="M1335 410.5H1635" stroke="#d62728" shape-rendering="crispEdges"/>
<path d="M1334.5 317V504.5H1635" fill="none" stroke="#a2a2a2" shape-rendering="crispEdges"/>
<text x="1353.65" y="517" fill="#969696" letter-spacing="0.6">-15s</text>
<text x="1447.3" y="517" fill="#969696" letter-spacing="0.6">-10s</text>
<text x="1540.95" y="517" fill="#969696" letter-spacing="0.6">-5s</text>
<text x="1634.6" y="517" fill="#969696" letter-spacing="0.6">0</text>
<text x="1330.6" y="331" fill="#969696" text-anchor="end" letter-spacing="0.65">2e-38</text>
<text x="1330.6" y="372.9" fill="#969696" text-anchor="end" letter-spacing="0.65">1e-38</text>
<text x="1330.6" y="414.8" fill="#969696" text-anchor="end" letter-spacing="0.65">0</text>
<text x="1330.6" y="456.7" fill="#969696" text-anchor="end" letter-spacing="0.65">-1e-38</text>
<text x="1330.6" y="498.6" fill="#969696" text-anchor="end" letter-spacing="0.65">-2e-38</text>
<text x="1484.5" y="307.2" fill="#f2f2f2" textLength="258" lengthAdjust="spacing">K1:VIS-ITMY_TM_COILOUTF_H4_OUTPUT</text>
<text x="1267.3" y="412.3" fill="#f2f2f2" letter-spacing="0.35" transform="rotate(-90 1267.3 412.3)">undef</text>
<text x="1250.5" y="559" fill="#ffffff" font-size="16" textLength="446.5" lengthAdjust="spacing">t0 = Fri Nov 04 2022 19:38:17 UTC [1351625915.6875]</text>
</svg>
</div>
</body></html>
